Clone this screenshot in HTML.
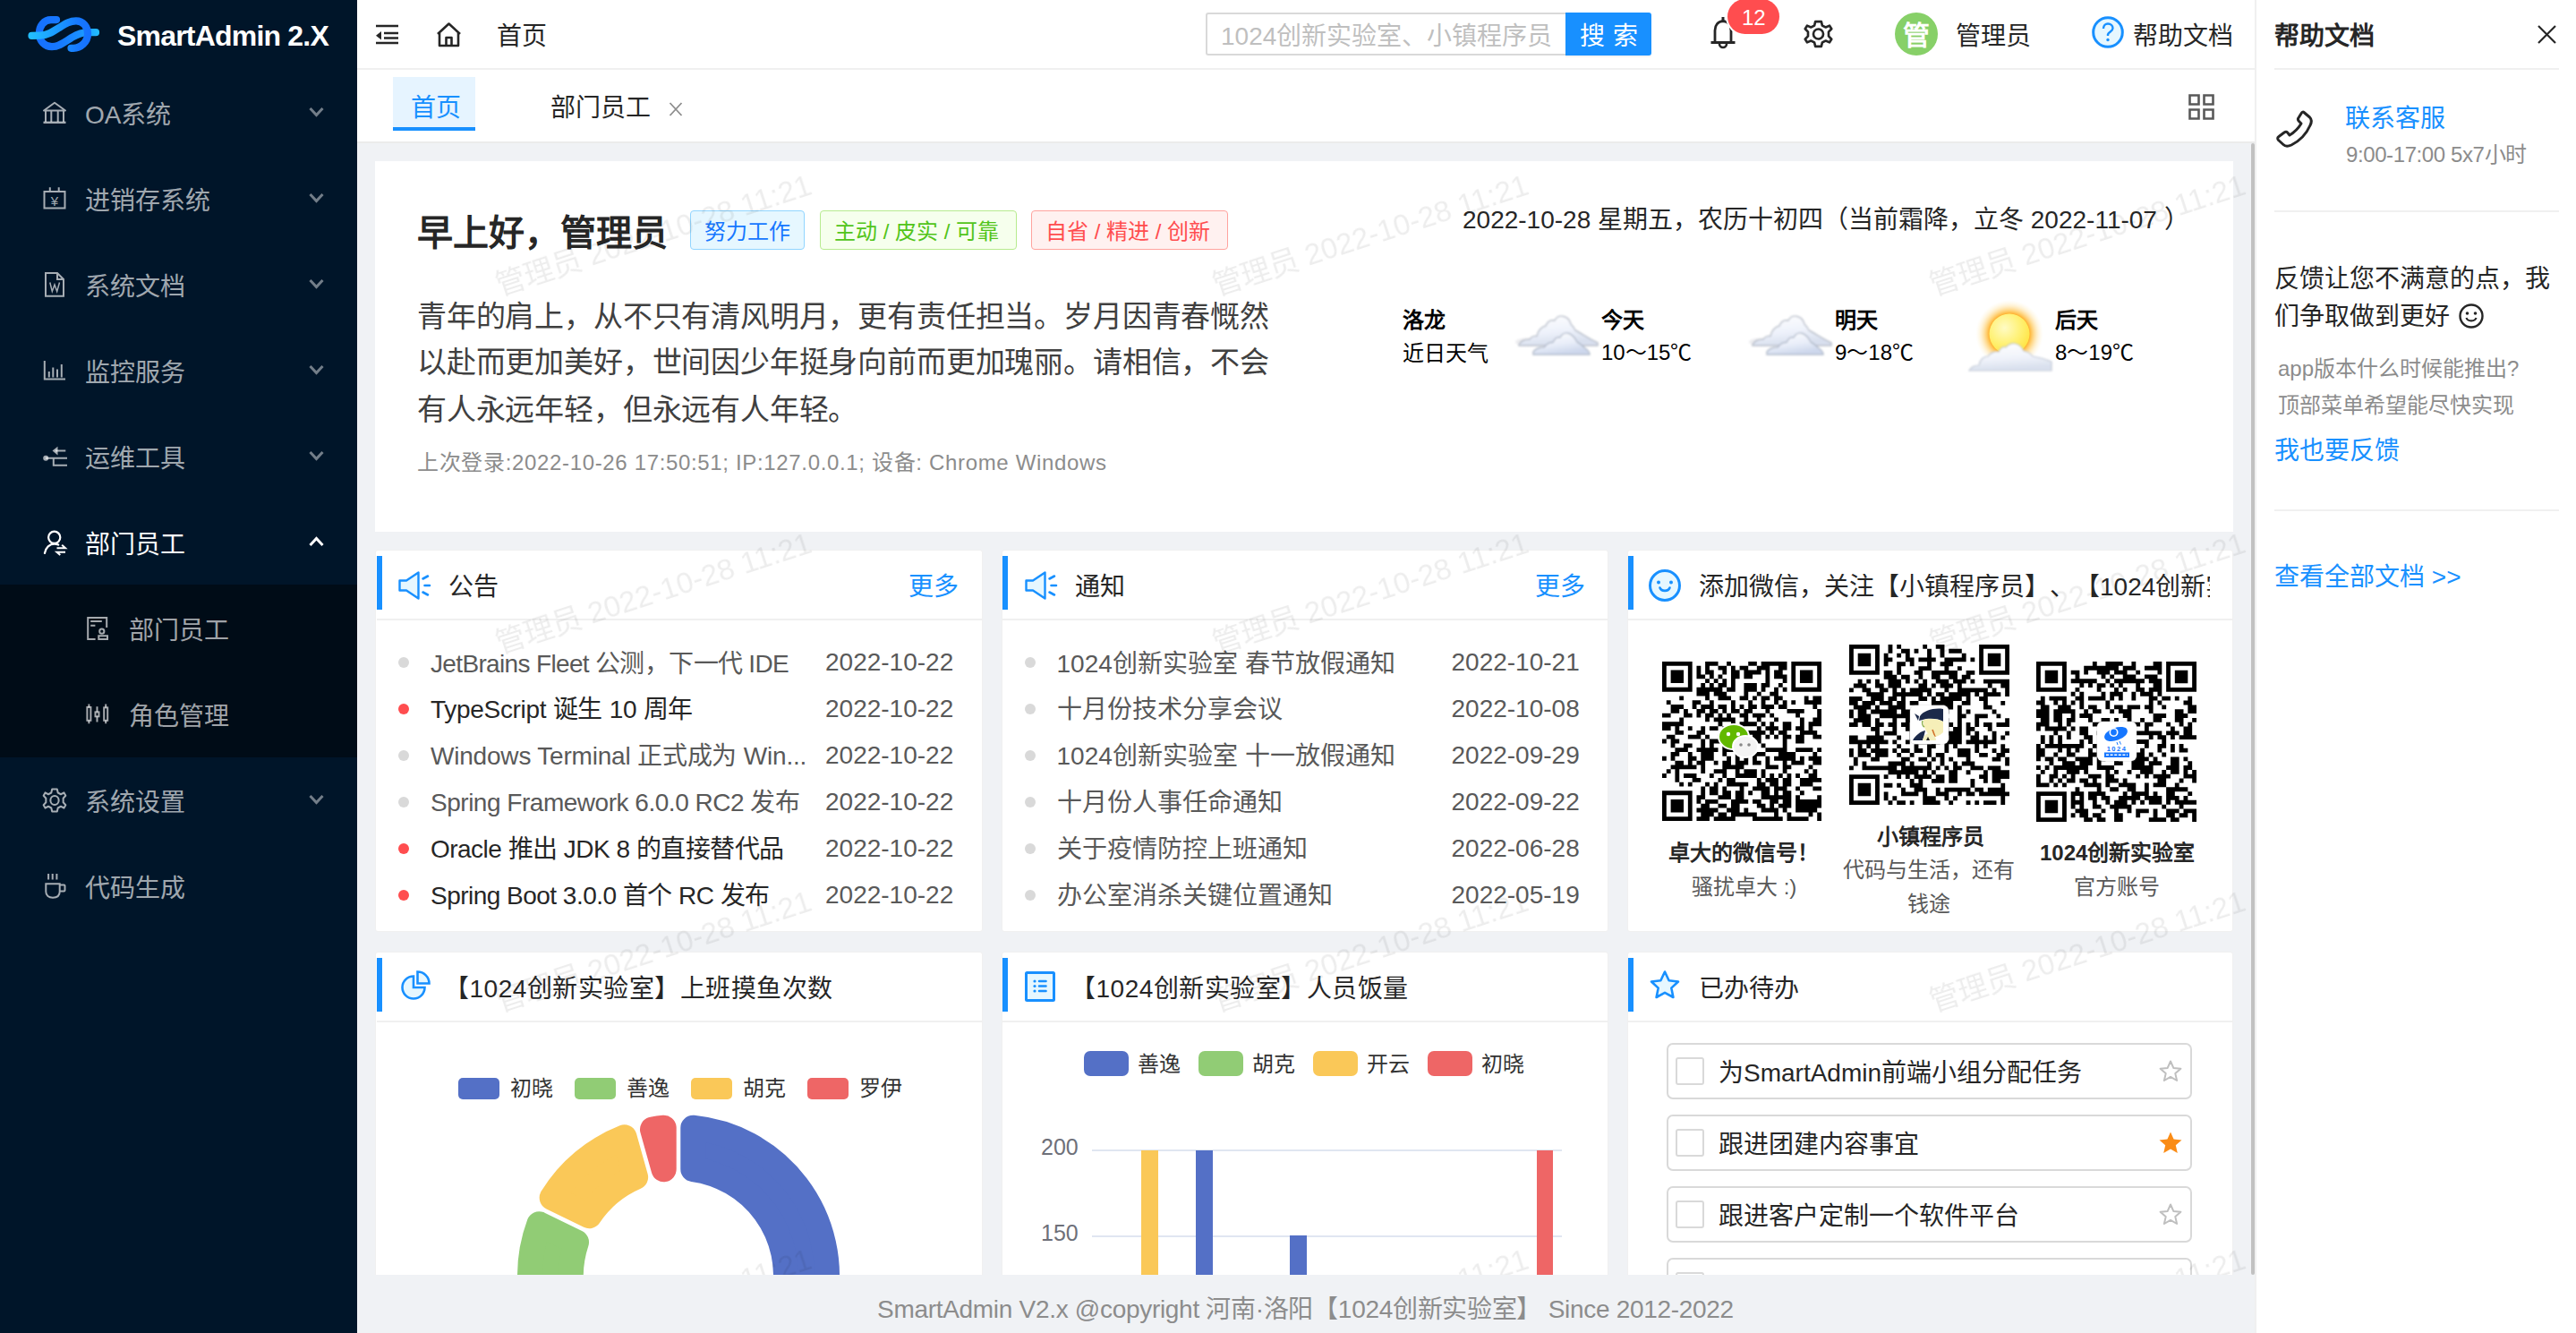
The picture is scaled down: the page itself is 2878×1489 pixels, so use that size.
<!DOCTYPE html><html lang="zh-CN"><head><meta charset="utf-8"><style>
*{box-sizing:border-box;margin:0;padding:0}
html,body{width:2878px;height:1489px;overflow:hidden;background:#f0f2f5;font-family:"Liberation Sans", sans-serif;text-spacing-trim:space-all}
.t{position:absolute;white-space:nowrap}
.a{position:absolute}
svg{position:absolute;overflow:visible}
</style></head><body>
<div class="a" style="left:0;top:0;width:399px;height:1489px;background:#001529"></div>
<div class="a" style="left:0;top:653px;width:399px;height:193px;background:#000c17"></div>
<svg style="left:28px;top:14px" width="88" height="48" viewBox="0 0 88 48">
<defs><linearGradient id="lgA" gradientUnits="userSpaceOnUse" x1="7" y1="0" x2="74" y2="0"><stop offset="0" stop-color="#22bdff"/><stop offset="0.45" stop-color="#1a98ff"/><stop offset="0.8" stop-color="#1677ff"/><stop offset="1" stop-color="#1670ff"/></linearGradient>
<linearGradient id="lgB" gradientUnits="userSpaceOnUse" x1="12" y1="0" x2="82" y2="0"><stop offset="0" stop-color="#1670ff"/><stop offset="0.35" stop-color="#1677ff"/><stop offset="0.7" stop-color="#1a90ff"/><stop offset="1" stop-color="#22bbff"/></linearGradient></defs>
<path d="M35 8.1 L29 8.1 C21 8.1 15.9 15 15.9 23 C15.9 32 22 38.2 30 38.2 C38 38.2 44 33 52 28 C60 23.5 64 22.2 70 22.2 L79 22.2" fill="none" stroke="url(#lgB)" stroke-width="8.2" stroke-linecap="round"/>
<path d="M7.5 25.8 L17 25.6 C25 25.4 30 22 38 17 C46 12 50 9.4 57 9.4 C65 9.4 70 16 70 24 C70 33 62 39.8 54 39.8 L51.5 39.8" fill="none" stroke="url(#lgA)" stroke-width="8.2" stroke-linecap="round"/>
</svg>
<div class="t" style="left:131px;top:23.5px;font-size:32px;line-height:32px;color:#ffffff;font-weight:bold;letter-spacing:-0.8px;">SmartAdmin 2.X</div>
<svg style="left:48px;top:113px;color:rgba(255,255,255,0.65)" width="28" height="28" viewBox="0 0 28 28"><path d="M1 10.5 L13 1.7 L25 10.5 Z M3 10.5 V23 M9.3 10.5 V23 M16.7 10.5 V23 M23 10.5 V23" fill="none" stroke="currentColor" stroke-width="2" stroke-linejoin="round"/><path d="M0.5 23.8 H25.5" stroke="currentColor" stroke-width="2.4"/></svg>
<div class="t" style="left:95px;top:114.5px;font-size:28px;line-height:28px;color:rgba(255,255,255,0.65);font-weight:normal;">OA系统</div>
<svg style="left:345px;top:119px" width="17" height="12"><path d="M1.5 2 L8.5 9.5 L15.5 2" fill="none" stroke="rgba(255,255,255,0.45)" stroke-width="3"/></svg>
<svg style="left:48px;top:209px;color:rgba(255,255,255,0.65)" width="28" height="28" viewBox="0 0 28 28"><path d="M1.5 4.9 H24.5 V23.4 H1.5 Z M7.8 0.2 V6 M17.7 0.2 V6" fill="none" stroke="currentColor" stroke-width="2"/><text x="13" y="20.5" font-size="15" text-anchor="middle" fill="currentColor" font-family="Liberation Sans">¥</text></svg>
<div class="t" style="left:95px;top:210.5px;font-size:28px;line-height:28px;color:rgba(255,255,255,0.65);font-weight:normal;">进销存系统</div>
<svg style="left:345px;top:215px" width="17" height="12"><path d="M1.5 2 L8.5 9.5 L15.5 2" fill="none" stroke="rgba(255,255,255,0.45)" stroke-width="3"/></svg>
<svg style="left:48px;top:305px;color:rgba(255,255,255,0.65)" width="28" height="28" viewBox="0 0 28 28"><path d="M3 0 H16 L23 7 V25.8 H3 Z M16 0 V7 H23" fill="none" stroke="currentColor" stroke-width="2" stroke-linejoin="miter"/><path d="M7.8 10.5 L10.3 20.5 L13 13 L15.7 20.5 L18.5 10.5" fill="none" stroke="currentColor" stroke-width="1.5"/></svg>
<div class="t" style="left:95px;top:306.5px;font-size:28px;line-height:28px;color:rgba(255,255,255,0.65);font-weight:normal;">系统文档</div>
<svg style="left:345px;top:311px" width="17" height="12"><path d="M1.5 2 L8.5 9.5 L15.5 2" fill="none" stroke="rgba(255,255,255,0.45)" stroke-width="3"/></svg>
<svg style="left:48px;top:401px;color:rgba(255,255,255,0.65)" width="28" height="28" viewBox="0 0 28 28"><path d="M1.8 2 V22.5 H25 M6.8 20.5 V14 M11.3 20.5 V9.6 M16 20.5 V11.4 M20.8 20.5 V6" fill="none" stroke="currentColor" stroke-width="2"/></svg>
<div class="t" style="left:95px;top:402.5px;font-size:28px;line-height:28px;color:rgba(255,255,255,0.65);font-weight:normal;">监控服务</div>
<svg style="left:345px;top:407px" width="17" height="12"><path d="M1.5 2 L8.5 9.5 L15.5 2" fill="none" stroke="rgba(255,255,255,0.45)" stroke-width="3"/></svg>
<svg style="left:48px;top:497px;color:rgba(255,255,255,0.65)" width="28" height="28" viewBox="0 0 28 28"><circle cx="3.2" cy="14.7" r="3" fill="currentColor"/><path d="M3 14.7 H27 M11.8 14.7 V22.8 H27 M14 6.6 H25.3" fill="none" stroke="currentColor" stroke-width="2"/><path d="M10.5 6.6 L16.5 1.8 L16.5 11.4 Z" fill="currentColor"/></svg>
<div class="t" style="left:95px;top:498.5px;font-size:28px;line-height:28px;color:rgba(255,255,255,0.65);font-weight:normal;">运维工具</div>
<svg style="left:345px;top:503px" width="17" height="12"><path d="M1.5 2 L8.5 9.5 L15.5 2" fill="none" stroke="rgba(255,255,255,0.45)" stroke-width="3"/></svg>
<svg style="left:48px;top:593px;color:#ffffff" width="28" height="28" viewBox="0 0 28 28"><circle cx="12.7" cy="7.3" r="6.6" fill="none" stroke="currentColor" stroke-width="2.2"/><path d="M1.9 25 C3 18.5 7.5 14.6 12.7 14.6 C14.5 14.6 16 15 17.2 15.6" fill="none" stroke="currentColor" stroke-width="2.2" stroke-linecap="round"/><path d="M15.5 19.2 H25 L21.2 15.8 M25 23.8 H15.5 L19.3 27" fill="none" stroke="currentColor" stroke-width="2"/></svg>
<div class="t" style="left:95px;top:594.5px;font-size:28px;line-height:28px;color:#ffffff;font-weight:normal;">部门员工</div>
<svg style="left:345px;top:599px" width="17" height="12"><path d="M1.5 10 L8.5 2.5 L15.5 10" fill="none" stroke="#fff" stroke-width="3"/></svg>
<svg style="left:48px;top:880px;color:rgba(255,255,255,0.65)" width="26" height="28" viewBox="0 0 28 28" preserveAspectRatio="none"><path d="M14 1.5 L17 1.5 L18 5.5 L21.5 7.2 L25.3 5.5 L27.3 8.8 L24.4 11.8 L24.4 16.2 L27.3 19.2 L25.3 22.5 L21.5 20.8 L18 22.5 L17 26.5 L11 26.5 L10 22.5 L6.5 20.8 L2.7 22.5 L0.7 19.2 L3.6 16.2 L3.6 11.8 L0.7 8.8 L2.7 5.5 L6.5 7.2 L10 5.5 L11 1.5 Z" fill="none" stroke="currentColor" stroke-width="2.2" stroke-linejoin="round"/><circle cx="14" cy="14" r="5" fill="none" stroke="currentColor" stroke-width="2.2"/></svg>
<div class="t" style="left:95px;top:882.5px;font-size:28px;line-height:28px;color:rgba(255,255,255,0.65);font-weight:normal;">系统设置</div>
<svg style="left:345px;top:887px" width="17" height="12"><path d="M1.5 2 L8.5 9.5 L15.5 2" fill="none" stroke="rgba(255,255,255,0.45)" stroke-width="3"/></svg>
<svg style="left:48px;top:977px;color:rgba(255,255,255,0.65)" width="28" height="28" viewBox="0 0 28 28"><path d="M3.3 10.3 H18.7 V19 C18.7 23.5 15.5 25.7 11 25.7 C6.5 25.7 3.3 23.5 3.3 19 Z M18.7 11.4 H23.5 Q24.5 11.4 24.5 12.4 V17.6 Q24.5 18.6 23.5 18.6 H18.7 M6.1 -1 V5.5 M10.7 -1 V5.5 M15.4 -1 V5.5" fill="none" stroke="currentColor" stroke-width="2"/></svg>
<div class="t" style="left:95px;top:978.5px;font-size:28px;line-height:28px;color:rgba(255,255,255,0.65);font-weight:normal;">代码生成</div>
<svg style="left:96px;top:689px;color:rgba(255,255,255,0.65)" width="26" height="28" viewBox="0 0 26 28"><path d="M10.6 25 H2.2 V1.1 H23.2 V12 M5.2 4.9 H17.8 M5.2 9.8 H10.4" fill="none" stroke="currentColor" stroke-width="2"/><circle cx="17.8" cy="16.2" r="2.6" fill="none" stroke="currentColor" stroke-width="2"/><path d="M14.3 25 V21.2 H24 V25 Z" fill="none" stroke="currentColor" stroke-width="2"/></svg>
<div class="t" style="left:144px;top:690.5px;font-size:28px;line-height:28px;color:rgba(255,255,255,0.65);font-weight:normal;">部门员工</div>
<svg style="left:96px;top:785px;color:rgba(255,255,255,0.65)" width="26" height="28" viewBox="0 0 26 28"><path d="M3.4 1.6 V23.2 M12.5 4.3 V21.4 M22.2 1.6 V23.2" fill="none" stroke="currentColor" stroke-width="2"/><rect x="1.4" y="5" width="4" height="14.8" fill="#000c17" stroke="currentColor" stroke-width="2"/><rect x="10.5" y="10.4" width="4" height="4.9" fill="#000c17" stroke="currentColor" stroke-width="2"/><rect x="20.2" y="5.4" width="4" height="14.4" fill="#000c17" stroke="currentColor" stroke-width="2"/></svg>
<div class="t" style="left:144px;top:786.5px;font-size:28px;line-height:28px;color:rgba(255,255,255,0.65);font-weight:normal;">角色管理</div>
<div class="a" style="left:399px;top:0;width:2120px;height:160px;background:#fff"></div>
<div class="a" style="left:399px;top:76px;width:2120px;height:2px;background:#f0f0f0"></div>
<div class="a" style="left:399px;top:158px;width:2120px;height:2px;background:#ebebeb"></div>
<svg style="left:420px;top:27px" width="26" height="23" viewBox="0 0 26 23"><path d="M0 2 H25 M9 10 H25 M9 15.5 H25 M0 21 H25" stroke="#262626" stroke-width="2.6" fill="none"/><path d="M0 12.7 L6 8 L6 17.4 Z" fill="#262626"/></svg>
<svg style="left:487px;top:25px" width="29" height="28" viewBox="0 0 29 28"><path d="M2 13 L14.5 1.5 L27 13 M4 11 V26 H25 V11 M11.5 26 V17 H17.5 V26" fill="none" stroke="#262626" stroke-width="2.6" stroke-linejoin="round"/></svg>
<div class="t" style="left:555px;top:26.8px;font-size:28px;line-height:28px;color:#262626;font-weight:normal;">首页</div>
<div class="a" style="left:1347px;top:14px;width:403px;height:48px;border:2px solid #d9d9d9;border-right:none;border-radius:3px 0 0 3px;background:#fff"></div>
<div class="t" style="left:1364px;top:26.8px;font-size:28px;line-height:28px;color:#bfbfbf;font-weight:normal;">1024创新实验室、小镇程序员</div>
<div class="a" style="left:1749px;top:14px;width:96px;height:48px;background:#1890ff;border-radius:0 3px 3px 0;box-shadow:0 2px 0 rgba(0,0,0,0.045)"></div>
<div class="t" style="left:1765px;top:26.8px;font-size:28px;line-height:28px;color:#ffffff;font-weight:normal;letter-spacing:9px;">搜索</div>
<svg style="left:1910px;top:17px" width="30" height="38" viewBox="0 0 30 38"><path d="M6 30 V17 C6 11 9.5 7 15 6.5 C20.5 7 24 11 24 17 V30 M1.5 30.5 H28.5" fill="none" stroke="#262626" stroke-width="2.8"/><path d="M15 2 L15 6" stroke="#262626" stroke-width="3"/><path d="M11 32 A4 4 0 0 0 19 32" fill="none" stroke="#262626" stroke-width="2.6"/></svg>
<div class="a" style="left:1930px;top:-1px;width:58px;height:39px;border-radius:20px;background:#ff4d4f;box-shadow:0 0 0 2px #fff"></div>
<div class="t" style="left:1946px;top:7.5px;font-size:24px;line-height:24px;color:#ffffff;font-weight:normal;">12</div>
<svg style="left:2016px;top:22px" width="31" height="32" viewBox="0 0 28 28"><path d="M14 1.5 L17 1.5 L18 5.5 L21.5 7.2 L25.3 5.5 L27.3 8.8 L24.4 11.8 L24.4 16.2 L27.3 19.2 L25.3 22.5 L21.5 20.8 L18 22.5 L17 26.5 L11 26.5 L10 22.5 L6.5 20.8 L2.7 22.5 L0.7 19.2 L3.6 16.2 L3.6 11.8 L0.7 8.8 L2.7 5.5 L6.5 7.2 L10 5.5 L11 1.5 Z" fill="none" stroke="#262626" stroke-width="2.4" stroke-linejoin="round"/><circle cx="14" cy="14" r="5" fill="none" stroke="#262626" stroke-width="2.4"/></svg>
<div class="a" style="left:2117px;top:14px;width:48px;height:48px;border-radius:50%;background:#87d068"></div>
<div class="t" style="left:2126px;top:25.0px;font-size:30px;line-height:30px;color:#ffffff;font-weight:bold;">管</div>
<div class="t" style="left:2185px;top:26.8px;font-size:28px;line-height:28px;color:#262626;font-weight:normal;">管理员</div>
<svg style="left:2337px;top:18px" width="36" height="36" viewBox="0 0 36 36"><circle cx="18" cy="18" r="16.3" fill="#e6f7ff" stroke="#1890ff" stroke-width="3"/><path d="M13 14 C13 10.5 15.5 8.5 18 8.5 C21 8.5 23.5 10.5 23.5 13.5 C23.5 17 19 17.5 18 20.5 V22" fill="none" stroke="#1890ff" stroke-width="2.4"/><circle cx="18" cy="26.5" r="1.7" fill="#1890ff"/></svg>
<div class="t" style="left:2383px;top:26.8px;font-size:28px;line-height:28px;color:#262626;font-weight:normal;">帮助文档</div>
<div class="a" style="left:439px;top:86px;width:92px;height:60px;background:#e6f4ff"></div>
<div class="a" style="left:439px;top:142px;width:92px;height:4px;background:#1890ff"></div>
<div class="t" style="left:459px;top:106.8px;font-size:28px;line-height:28px;color:#1890ff;font-weight:normal;">首页</div>
<div class="t" style="left:615px;top:106.8px;font-size:28px;line-height:28px;color:#262626;font-weight:normal;">部门员工</div>
<svg style="left:747px;top:114px" width="16" height="16" viewBox="0 0 16 16"><path d="M1.5 1 L14.5 15 M14.5 1 L1.5 15" stroke="#8c8c8c" stroke-width="1.8"/></svg>
<svg style="left:2445px;top:105px" width="29" height="29" viewBox="0 0 29 29"><path d="M1.5 1.5 H11.5 V11.5 H1.5 Z M17.5 1.5 H27.5 V11.5 H17.5 Z M1.5 17.5 H11.5 V27.5 H1.5 Z M17.5 17.5 H27.5 V27.5 H17.5 Z" fill="none" stroke="#595959" stroke-width="2.6"/></svg>
<div class="a" style="left:2519px;top:0;width:2px;height:1489px;background:#f0f0f0"></div>
<div class="a" style="left:2521px;top:0;width:357px;height:1489px;background:#fff"></div>
<div class="t" style="left:2541px;top:26.9px;font-size:28px;line-height:28px;color:#262626;font-weight:bold;">帮助文档</div>
<svg style="left:2835px;top:28px" width="21" height="21" viewBox="0 0 21 21"><path d="M1 1 L20 20 M20 1 L1 20" stroke="#262626" stroke-width="2.2"/></svg>
<div class="a" style="left:2541px;top:76px;width:318px;height:2px;background:#f0f0f0"></div>
<svg style="left:2543px;top:123px" width="42" height="42" viewBox="0 0 42 42"><path d="M31 2.5 L37.5 8 C40 10.5 40 13 38 17 C34 26 27 34 17 39 C12.5 41 10 40.5 8 38.5 L2.5 33.5 C1.2 32 1.5 30.5 3 29.5 L9 25 C10.5 24 12 24 13 25.5 L15 28 C20 25 25 20 28 15 L25.5 12.5 C24 11 24 9.5 25.2 8.3 L28.5 3 C29.2 2 30.2 1.8 31 2.5 Z" fill="none" stroke="#262626" stroke-width="3" stroke-linejoin="round"/></svg>
<div class="t" style="left:2620px;top:119.1px;font-size:28px;line-height:28px;color:#1890ff;font-weight:normal;">联系客服</div>
<div class="t" style="left:2621px;top:161.0px;font-size:24px;line-height:24px;color:#8c8c8c;font-weight:normal;letter-spacing:-0.4px;">9:00-17:00 5x7小时</div>
<div class="a" style="left:2541px;top:235px;width:318px;height:2px;background:#f0f0f0"></div>
<div class="t" style="left:2541px;top:297.5px;font-size:28px;line-height:28px;color:#262626;font-weight:normal;">反馈让您不满意的点，我</div>
<div class="t" style="left:2541px;top:340.0px;font-size:28px;line-height:28px;color:#262626;font-weight:normal;">们争取做到更好</div>
<svg style="left:2747px;top:339px" width="28" height="28" viewBox="0 0 28 28"><circle cx="14" cy="14" r="12.5" fill="none" stroke="#262626" stroke-width="2.4"/><circle cx="9.5" cy="11" r="1.8" fill="#262626"/><circle cx="18.5" cy="11" r="1.8" fill="#262626"/><path d="M8.5 16 C10 20.5 18 20.5 19.5 16" fill="none" stroke="#262626" stroke-width="2.2"/></svg>
<div class="t" style="left:2545px;top:399.5px;font-size:24px;line-height:24px;color:#8c8c8c;font-weight:normal;">app版本什么时候能推出?</div>
<div class="t" style="left:2545px;top:440.8px;font-size:24px;line-height:24px;color:#8c8c8c;font-weight:normal;">顶部菜单希望能尽快实现</div>
<div class="t" style="left:2541px;top:489.5px;font-size:28px;line-height:28px;color:#1890ff;font-weight:normal;">我也要反馈</div>
<div class="a" style="left:2541px;top:569px;width:318px;height:2px;background:#f0f0f0"></div>
<div class="t" style="left:2541px;top:631.2px;font-size:28px;line-height:28px;color:#1890ff;font-weight:normal;">查看全部文档 &gt;&gt;</div>
<div class="a" style="left:399px;top:160px;width:2116px;height:1264px;overflow:hidden">
<div class="a" style="left:20px;top:20px;width:2076px;height:414px;background:#fff"></div>
<div class="t" style="left:67px;top:80.0px;font-size:40px;line-height:40px;color:#262626;font-weight:bold;">早上好，管理员</div>
<div class="a" style="left:372px;top:75px;width:128px;height:44px;background:#e6f7ff;border:1.5px solid #91d5ff;border-radius:4px"></div>
<div class="t" style="left:388px;top:86.5px;font-size:24px;line-height:24px;color:#1677ff;font-weight:normal;">努力工作</div>
<div class="a" style="left:517px;top:75px;width:220px;height:44px;background:#f6ffed;border:1.5px solid #b7eb8f;border-radius:4px"></div>
<div class="t" style="left:533px;top:86.5px;font-size:24px;line-height:24px;color:#52c41a;font-weight:normal;">主动 / 皮实 / 可靠</div>
<div class="a" style="left:753px;top:75px;width:220px;height:44px;background:#fff1f0;border:1.5px solid #ffa39e;border-radius:4px"></div>
<div class="t" style="left:769px;top:86.5px;font-size:24px;line-height:24px;color:#ff4d4f;font-weight:normal;">自省 / 精进 / 创新</div>
<div class="t" style="left:67px;top:176.6px;font-size:33px;line-height:33px;color:#404040;font-weight:normal;letter-spacing:-0.18px;">青年的肩上，从不只有清风明月，更有责任担当。岁月因青春慨然</div>
<div class="t" style="left:67px;top:228.0px;font-size:33px;line-height:33px;color:#404040;font-weight:normal;letter-spacing:-0.18px;">以赴而更加美好，世间因少年挺身向前而更加瑰丽。请相信，不会</div>
<div class="t" style="left:67px;top:280.5px;font-size:33px;line-height:33px;color:#404040;font-weight:normal;letter-spacing:-0.18px;">有人永远年轻，但永远有人年轻。</div>
<div class="t" style="left:67px;top:345.2px;font-size:24px;line-height:24px;color:#8c8c8c;font-weight:normal;letter-spacing:0.66px;">上次登录:2022-10-26 17:50:51; IP:127.0.0.1; 设备: Chrome Windows</div>
<div class="t" style="left:1235px;top:71.6px;font-size:28px;line-height:28px;color:#262626;font-weight:normal;">2022-10-28 星期五，农历十初四（当前霜降，立冬 2022-11-07 ）</div>
<div class="t" style="left:1168px;top:186.0px;font-size:24px;line-height:24px;color:#000;font-weight:bold;">洛龙</div>
<div class="t" style="left:1168px;top:223.2px;font-size:24px;line-height:24px;color:#000;font-weight:normal;">近日天气</div>
<svg style="left:1286px;top:180px;" width="110" height="65" viewBox="0 0 110 65"><defs><linearGradient id="cba" x1="0" y1="0" x2="0.3" y2="1"><stop offset="0" stop-color="#ffffff"/><stop offset="0.6" stop-color="#eef2fb"/><stop offset="1" stop-color="#d8dfee"/></linearGradient><linearGradient id="cfa" x1="0" y1="0" x2="0.4" y2="1"><stop offset="0" stop-color="#ffffff"/><stop offset="0.6" stop-color="#e9eef9"/><stop offset="1" stop-color="#cdd7ec"/></linearGradient><filter id="bla" x="-20%" y="-20%" width="140%" height="140%"><feGaussianBlur stdDeviation="0.9"/></filter></defs>
<g filter="url(#bla)"><ellipse cx="22" cy="42" rx="14" ry="4.5" fill="#e8e9ec" opacity="0.8"/>
<path d="M12 45 C14 41 19 39 24 39 C26 36 29 35 32 35.5 C33 30 37 25 42 24 C44 19 48 17 52 18 C54 14 58 12.5 62 13.5 C66 14.5 69 18 70 22 C72 24 74 27 75 29 C81 32 90 38 100 43 L100 46 L12 46 Z" fill="url(#cba)" stroke="#b9bfca" stroke-width="1.4"/>
<path d="M28 53 C30 50 35 48 40 48 C43 44 46 42 50 42.5 C52 38 55 36 58 37 C60 33 64 31 68 32.5 C72 34 75 38 77 42 C81 44 84 47 86 49 C89 51 91 53 91 56 L28 56 Z" fill="url(#cfa)" stroke="#b3bccb" stroke-width="1.4"/></g></svg>
<div class="t" style="left:1390px;top:186.0px;font-size:24px;line-height:24px;color:#000;font-weight:bold;">今天</div>
<div class="t" style="left:1390px;top:222.1px;font-size:24px;line-height:24px;color:#000;font-weight:normal;">10～15℃</div>
<svg style="left:1547px;top:180px;" width="110" height="65" viewBox="0 0 110 65"><defs><linearGradient id="cbb" x1="0" y1="0" x2="0.3" y2="1"><stop offset="0" stop-color="#ffffff"/><stop offset="0.6" stop-color="#eef2fb"/><stop offset="1" stop-color="#d8dfee"/></linearGradient><linearGradient id="cfb" x1="0" y1="0" x2="0.4" y2="1"><stop offset="0" stop-color="#ffffff"/><stop offset="0.6" stop-color="#e9eef9"/><stop offset="1" stop-color="#cdd7ec"/></linearGradient><filter id="blb" x="-20%" y="-20%" width="140%" height="140%"><feGaussianBlur stdDeviation="0.9"/></filter></defs>
<g filter="url(#blb)"><ellipse cx="22" cy="42" rx="14" ry="4.5" fill="#e8e9ec" opacity="0.8"/>
<path d="M12 45 C14 41 19 39 24 39 C26 36 29 35 32 35.5 C33 30 37 25 42 24 C44 19 48 17 52 18 C54 14 58 12.5 62 13.5 C66 14.5 69 18 70 22 C72 24 74 27 75 29 C81 32 90 38 100 43 L100 46 L12 46 Z" fill="url(#cbb)" stroke="#b9bfca" stroke-width="1.4"/>
<path d="M28 53 C30 50 35 48 40 48 C43 44 46 42 50 42.5 C52 38 55 36 58 37 C60 33 64 31 68 32.5 C72 34 75 38 77 42 C81 44 84 47 86 49 C89 51 91 53 91 56 L28 56 Z" fill="url(#cfb)" stroke="#b3bccb" stroke-width="1.4"/></g></svg>
<div class="t" style="left:1651px;top:186.0px;font-size:24px;line-height:24px;color:#000;font-weight:bold;">明天</div>
<div class="t" style="left:1651px;top:222.1px;font-size:24px;line-height:24px;color:#000;font-weight:normal;">9～18℃</div>
<svg style="left:1796px;top:170px;" width="100" height="90" viewBox="0 0 100 90"><defs><radialGradient id="sg" cx="0.5" cy="0.5" r="0.5"><stop offset="0" stop-color="#ffc040" stop-opacity="1"/><stop offset="0.6" stop-color="#ffb436" stop-opacity="1"/><stop offset="0.68" stop-color="#ffc552" stop-opacity="0.8"/><stop offset="0.85" stop-color="#ffdf95" stop-opacity="0.35"/><stop offset="1" stop-color="#fff3cc" stop-opacity="0"/></radialGradient><radialGradient id="sd" cx="0.38" cy="0.35" r="0.75"><stop offset="0" stop-color="#fffbc4"/><stop offset="0.5" stop-color="#fff27a"/><stop offset="1" stop-color="#ffe23a"/></radialGradient><linearGradient id="sc" x1="0" y1="0" x2="0.2" y2="1"><stop offset="0" stop-color="#ffffff"/><stop offset="0.6" stop-color="#f0f3fa"/><stop offset="1" stop-color="#d9e0ee"/></linearGradient><filter id="sb" x="-20%" y="-20%" width="140%" height="140%"><feGaussianBlur stdDeviation="0.9"/></filter><filter id="sb2"><feGaussianBlur stdDeviation="0.6"/></filter></defs>
<circle cx="50" cy="43" r="38" fill="url(#sg)"/><circle cx="50" cy="43" r="22.5" fill="url(#sd)" filter="url(#sb2)"/>
<g filter="url(#sb)"><path d="M5 84 C7 80 11 78 16 78 C17 72 21 68 26 68 C29 64 34 62 38 63 C40 59 43 57 46 58 C49 55 53 53 57 54 C61 55 64 58 66 62 C70 63 74 65 76 68 C82 69 90 71 97 74 L97 84 Z" fill="url(#sc)" stroke="#c3cad6" stroke-width="1.2"/></g></svg>
<div class="t" style="left:1897px;top:186.0px;font-size:24px;line-height:24px;color:#000;font-weight:bold;">后天</div>
<div class="t" style="left:1897px;top:222.1px;font-size:24px;line-height:24px;color:#000;font-weight:normal;">8～19℃</div>
<div class="a" style="left:20px;top:454px;width:679px;height:427px;background:#fff;border:1.5px solid #f0f0f0;border-radius:3px"></div>
<div class="a" style="left:21.5px;top:461px;width:6.0px;height:60px;background:#1890ff"></div>
<div class="a" style="left:21.5px;top:531px;width:676.0px;height:2px;background:#f0f0f0"></div>
<svg style="left:46px;top:478px;" width="36" height="32" viewBox="0 0 36 32"><path d="M1.5 10.5 H9 L22.5 1.5 V30.5 L9 21.5 H1.5 Z" fill="#e6f7ff" stroke="#1890ff" stroke-width="2.4" stroke-linejoin="round"/><path d="M27.5 8.5 L33 5.5 M29.5 16 H35 M27.5 23.5 L33 26.5" stroke="#1890ff" stroke-width="2.6" stroke-linecap="round"/></svg>
<div class="t" style="left:102px;top:482.4px;font-size:28px;line-height:28px;color:#262626;font-weight:normal;">公告</div>
<div class="t" style="left:616px;top:482.4px;font-size:28px;line-height:28px;color:#1890ff;font-weight:normal;">更多</div>
<div class="a" style="left:46px;top:574.0px;width:12px;height:12.0px;border-radius:50%;background:#d9d9d9"></div>
<div class="t" style="left:82px;top:567.5px;font-size:28px;line-height:28px;color:#595959;font-weight:normal;letter-spacing:-0.65px;">JetBrains Fleet 公测，下一代 IDE</div>
<div class="t" style="left:523px;top:566.0px;font-size:28px;line-height:28px;color:#595959;font-weight:normal;">2022-10-22</div>
<div class="a" style="left:46px;top:625.9px;width:12px;height:12.0px;border-radius:50%;background:#ff4d4f"></div>
<div class="t" style="left:82px;top:619.4px;font-size:28px;line-height:28px;color:#262626;font-weight:normal;letter-spacing:-0.3px;">TypeScript 诞生 10 周年</div>
<div class="t" style="left:523px;top:617.9px;font-size:28px;line-height:28px;color:#595959;font-weight:normal;">2022-10-22</div>
<div class="a" style="left:46px;top:677.8px;width:12px;height:12.0px;border-radius:50%;background:#d9d9d9"></div>
<div class="t" style="left:82px;top:671.3px;font-size:28px;line-height:28px;color:#595959;font-weight:normal;letter-spacing:-0.2px;">Windows Terminal 正式成为 Win...</div>
<div class="t" style="left:523px;top:669.8px;font-size:28px;line-height:28px;color:#595959;font-weight:normal;">2022-10-22</div>
<div class="a" style="left:46px;top:729.7px;width:12px;height:12.0px;border-radius:50%;background:#d9d9d9"></div>
<div class="t" style="left:82px;top:723.2px;font-size:28px;line-height:28px;color:#595959;font-weight:normal;letter-spacing:-0.48px;">Spring Framework 6.0.0 RC2 发布</div>
<div class="t" style="left:523px;top:721.7px;font-size:28px;line-height:28px;color:#595959;font-weight:normal;">2022-10-22</div>
<div class="a" style="left:46px;top:781.6px;width:12px;height:12.0px;border-radius:50%;background:#ff4d4f"></div>
<div class="t" style="left:82px;top:775.1px;font-size:28px;line-height:28px;color:#262626;font-weight:normal;letter-spacing:-0.52px;">Oracle 推出 JDK 8 的直接替代品</div>
<div class="t" style="left:523px;top:773.6px;font-size:28px;line-height:28px;color:#595959;font-weight:normal;">2022-10-22</div>
<div class="a" style="left:46px;top:833.5px;width:12px;height:12.0px;border-radius:50%;background:#ff4d4f"></div>
<div class="t" style="left:82px;top:827.0px;font-size:28px;line-height:28px;color:#262626;font-weight:normal;letter-spacing:-0.52px;">Spring Boot 3.0.0 首个 RC 发布</div>
<div class="t" style="left:523px;top:825.5px;font-size:28px;line-height:28px;color:#595959;font-weight:normal;">2022-10-22</div>
<div class="a" style="left:719.5px;top:454px;width:678.5px;height:427px;background:#fff;border:1.5px solid #f0f0f0;border-radius:3px"></div>
<div class="a" style="left:721.0px;top:461px;width:6.0px;height:60px;background:#1890ff"></div>
<div class="a" style="left:721.0px;top:531px;width:675.5px;height:2px;background:#f0f0f0"></div>
<svg style="left:745.5px;top:478px;" width="36" height="32" viewBox="0 0 36 32"><path d="M1.5 10.5 H9 L22.5 1.5 V30.5 L9 21.5 H1.5 Z" fill="#e6f7ff" stroke="#1890ff" stroke-width="2.4" stroke-linejoin="round"/><path d="M27.5 8.5 L33 5.5 M29.5 16 H35 M27.5 23.5 L33 26.5" stroke="#1890ff" stroke-width="2.6" stroke-linecap="round"/></svg>
<div class="t" style="left:801.5px;top:482.4px;font-size:28px;line-height:28px;color:#262626;font-weight:normal;">通知</div>
<div class="t" style="left:1315.5px;top:482.4px;font-size:28px;line-height:28px;color:#1890ff;font-weight:normal;">更多</div>
<div class="a" style="left:745.5px;top:574.0px;width:12.0px;height:12.0px;border-radius:50%;background:#d9d9d9"></div>
<div class="t" style="left:781.5px;top:567.5px;font-size:28px;line-height:28px;color:#595959;font-weight:normal;">1024创新实验室 春节放假通知</div>
<div class="t" style="left:1222.5px;top:566.0px;font-size:28px;line-height:28px;color:#595959;font-weight:normal;">2022-10-21</div>
<div class="a" style="left:745.5px;top:625.9px;width:12.0px;height:12.0px;border-radius:50%;background:#d9d9d9"></div>
<div class="t" style="left:781.5px;top:619.4px;font-size:28px;line-height:28px;color:#595959;font-weight:normal;">十月份技术分享会议</div>
<div class="t" style="left:1222.5px;top:617.9px;font-size:28px;line-height:28px;color:#595959;font-weight:normal;">2022-10-08</div>
<div class="a" style="left:745.5px;top:677.8px;width:12.0px;height:12.0px;border-radius:50%;background:#d9d9d9"></div>
<div class="t" style="left:781.5px;top:671.3px;font-size:28px;line-height:28px;color:#595959;font-weight:normal;">1024创新实验室 十一放假通知</div>
<div class="t" style="left:1222.5px;top:669.8px;font-size:28px;line-height:28px;color:#595959;font-weight:normal;">2022-09-29</div>
<div class="a" style="left:745.5px;top:729.7px;width:12.0px;height:12.0px;border-radius:50%;background:#d9d9d9"></div>
<div class="t" style="left:781.5px;top:723.2px;font-size:28px;line-height:28px;color:#595959;font-weight:normal;">十月份人事任命通知</div>
<div class="t" style="left:1222.5px;top:721.7px;font-size:28px;line-height:28px;color:#595959;font-weight:normal;">2022-09-22</div>
<div class="a" style="left:745.5px;top:781.6px;width:12.0px;height:12.0px;border-radius:50%;background:#d9d9d9"></div>
<div class="t" style="left:781.5px;top:775.1px;font-size:28px;line-height:28px;color:#595959;font-weight:normal;">关于疫情防控上班通知</div>
<div class="t" style="left:1222.5px;top:773.6px;font-size:28px;line-height:28px;color:#595959;font-weight:normal;">2022-06-28</div>
<div class="a" style="left:745.5px;top:833.5px;width:12.0px;height:12.0px;border-radius:50%;background:#d9d9d9"></div>
<div class="t" style="left:781.5px;top:827.0px;font-size:28px;line-height:28px;color:#595959;font-weight:normal;">办公室消杀关键位置通知</div>
<div class="t" style="left:1222.5px;top:825.5px;font-size:28px;line-height:28px;color:#595959;font-weight:normal;">2022-05-19</div>
<div class="a" style="left:1418.5px;top:454px;width:677.5px;height:427px;background:#fff;border:1.5px solid #f0f0f0;border-radius:3px"></div>
<div class="a" style="left:1420.0px;top:461px;width:6.0px;height:60px;background:#1890ff"></div>
<div class="a" style="left:1420.0px;top:531px;width:674.5px;height:2px;background:#f0f0f0"></div>
<svg style="left:1443px;top:476px;" width="36" height="36" viewBox="0 0 36 36"><circle cx="18" cy="18" r="16.5" fill="#e6f7ff" stroke="#1890ff" stroke-width="3"/><circle cx="11" cy="14.5" r="2" fill="#1890ff"/><circle cx="25" cy="14.5" r="2" fill="#1890ff"/><path d="M12.5 20.5 C14 25 22 25 23.5 20.5" fill="none" stroke="#1890ff" stroke-width="2.6" stroke-linecap="round"/></svg>
<div class="a" style="left:1499px;top:480.9px;width:571px;height:30px;overflow:hidden"><div class="t" style="left:0px;top:1.5px;font-size:28px;line-height:28px;color:#262626;font-weight:normal;">添加微信，关注【小镇程序员】、【1024创新实验室】</div></div>
<svg style="left:1458px;top:579px;" width="178" height="178" viewBox="0 0 178 178"><path d="M0.00 0.00h33.68v4.81h-33.68zM48.11 0.00h14.43v4.81h-14.43zM72.16 0.00h4.81v4.81h-4.81zM96.22 0.00h9.62v4.81h-9.62zM110.65 0.00h28.86v4.81h-28.86zM144.32 0.00h33.68v4.81h-33.68zM0.00 4.81h4.81v4.81h-4.81zM28.86 4.81h4.81v4.81h-4.81zM38.49 4.81h4.81v4.81h-4.81zM48.11 4.81h4.81v4.81h-4.81zM62.54 4.81h9.62v4.81h-9.62zM76.97 4.81h4.81v4.81h-4.81zM86.59 4.81h9.62v4.81h-9.62zM105.84 4.81h14.43v4.81h-14.43zM129.89 4.81h9.62v4.81h-9.62zM144.32 4.81h4.81v4.81h-4.81zM173.19 4.81h4.81v4.81h-4.81zM0.00 9.62h4.81v4.81h-4.81zM9.62 9.62h14.43v4.81h-14.43zM28.86 9.62h4.81v4.81h-4.81zM38.49 9.62h4.81v4.81h-4.81zM48.11 9.62h9.62v4.81h-9.62zM67.35 9.62h4.81v4.81h-4.81zM76.97 9.62h9.62v4.81h-9.62zM91.41 9.62h19.24v4.81h-19.24zM115.46 9.62h4.81v4.81h-4.81zM125.08 9.62h9.62v4.81h-9.62zM144.32 9.62h4.81v4.81h-4.81zM153.95 9.62h14.43v4.81h-14.43zM173.19 9.62h4.81v4.81h-4.81zM0.00 14.43h4.81v4.81h-4.81zM9.62 14.43h14.43v4.81h-14.43zM28.86 14.43h4.81v4.81h-4.81zM38.49 14.43h9.62v4.81h-9.62zM52.92 14.43h4.81v4.81h-4.81zM62.54 14.43h4.81v4.81h-4.81zM76.97 14.43h9.62v4.81h-9.62zM91.41 14.43h9.62v4.81h-9.62zM115.46 14.43h4.81v4.81h-4.81zM125.08 14.43h14.43v4.81h-14.43zM144.32 14.43h4.81v4.81h-4.81zM153.95 14.43h14.43v4.81h-14.43zM173.19 14.43h4.81v4.81h-4.81zM0.00 19.24h4.81v4.81h-4.81zM9.62 19.24h14.43v4.81h-14.43zM28.86 19.24h4.81v4.81h-4.81zM48.11 19.24h4.81v4.81h-4.81zM57.73 19.24h4.81v4.81h-4.81zM67.35 19.24h4.81v4.81h-4.81zM76.97 19.24h4.81v4.81h-4.81zM115.46 19.24h4.81v4.81h-4.81zM134.70 19.24h4.81v4.81h-4.81zM144.32 19.24h4.81v4.81h-4.81zM153.95 19.24h14.43v4.81h-14.43zM173.19 19.24h4.81v4.81h-4.81zM0.00 24.05h4.81v4.81h-4.81zM28.86 24.05h4.81v4.81h-4.81zM43.30 24.05h4.81v4.81h-4.81zM52.92 24.05h4.81v4.81h-4.81zM62.54 24.05h9.62v4.81h-9.62zM76.97 24.05h4.81v4.81h-4.81zM91.41 24.05h14.43v4.81h-14.43zM110.65 24.05h9.62v4.81h-9.62zM129.89 24.05h4.81v4.81h-4.81zM144.32 24.05h4.81v4.81h-4.81zM173.19 24.05h4.81v4.81h-4.81zM0.00 28.86h33.68v4.81h-33.68zM38.49 28.86h28.86v4.81h-28.86zM72.16 28.86h9.62v4.81h-9.62zM91.41 28.86h14.43v4.81h-14.43zM110.65 28.86h4.81v4.81h-4.81zM125.08 28.86h4.81v4.81h-4.81zM134.70 28.86h4.81v4.81h-4.81zM144.32 28.86h33.68v4.81h-33.68zM38.49 33.68h14.43v4.81h-14.43zM57.73 33.68h14.43v4.81h-14.43zM91.41 33.68h4.81v4.81h-4.81zM105.84 33.68h4.81v4.81h-4.81zM120.27 33.68h9.62v4.81h-9.62zM19.24 38.49h4.81v4.81h-4.81zM48.11 38.49h4.81v4.81h-4.81zM62.54 38.49h14.43v4.81h-14.43zM86.59 38.49h9.62v4.81h-9.62zM101.03 38.49h4.81v4.81h-4.81zM110.65 38.49h9.62v4.81h-9.62zM125.08 38.49h9.62v4.81h-9.62zM158.76 38.49h4.81v4.81h-4.81zM168.38 38.49h9.62v4.81h-9.62zM4.81 43.30h4.81v4.81h-4.81zM33.68 43.30h9.62v4.81h-9.62zM52.92 43.30h4.81v4.81h-4.81zM76.97 43.30h4.81v4.81h-4.81zM96.22 43.30h4.81v4.81h-4.81zM110.65 43.30h4.81v4.81h-4.81zM125.08 43.30h4.81v4.81h-4.81zM134.70 43.30h4.81v4.81h-4.81zM144.32 43.30h4.81v4.81h-4.81zM158.76 43.30h19.24v4.81h-19.24zM9.62 48.11h14.43v4.81h-14.43zM33.68 48.11h4.81v4.81h-4.81zM43.30 48.11h14.43v4.81h-14.43zM62.54 48.11h9.62v4.81h-9.62zM76.97 48.11h4.81v4.81h-4.81zM86.59 48.11h4.81v4.81h-4.81zM96.22 48.11h9.62v4.81h-9.62zM110.65 48.11h14.43v4.81h-14.43zM129.89 48.11h9.62v4.81h-9.62zM168.38 48.11h4.81v4.81h-4.81zM9.62 52.92h9.62v4.81h-9.62zM24.05 52.92h4.81v4.81h-4.81zM38.49 52.92h9.62v4.81h-9.62zM52.92 52.92h9.62v4.81h-9.62zM67.35 52.92h4.81v4.81h-4.81zM76.97 52.92h9.62v4.81h-9.62zM91.41 52.92h9.62v4.81h-9.62zM115.46 52.92h4.81v4.81h-4.81zM139.51 52.92h19.24v4.81h-19.24zM173.19 52.92h4.81v4.81h-4.81zM0.00 57.73h9.62v4.81h-9.62zM24.05 57.73h9.62v4.81h-9.62zM38.49 57.73h4.81v4.81h-4.81zM48.11 57.73h9.62v4.81h-9.62zM62.54 57.73h4.81v4.81h-4.81zM72.16 57.73h4.81v4.81h-4.81zM86.59 57.73h9.62v4.81h-9.62zM101.03 57.73h14.43v4.81h-14.43zM120.27 57.73h4.81v4.81h-4.81zM149.14 57.73h4.81v4.81h-4.81zM173.19 57.73h4.81v4.81h-4.81zM19.24 62.54h4.81v4.81h-4.81zM48.11 62.54h4.81v4.81h-4.81zM57.73 62.54h24.05v4.81h-24.05zM91.41 62.54h4.81v4.81h-4.81zM105.84 62.54h4.81v4.81h-4.81zM125.08 62.54h4.81v4.81h-4.81zM153.95 62.54h4.81v4.81h-4.81zM168.38 62.54h9.62v4.81h-9.62zM0.00 67.35h24.05v4.81h-24.05zM62.54 67.35h4.81v4.81h-4.81zM76.97 67.35h4.81v4.81h-4.81zM86.59 67.35h19.24v4.81h-19.24zM110.65 67.35h4.81v4.81h-4.81zM120.27 67.35h4.81v4.81h-4.81zM134.70 67.35h9.62v4.81h-9.62zM153.95 67.35h4.81v4.81h-4.81zM163.57 67.35h14.43v4.81h-14.43zM0.00 72.16h9.62v4.81h-9.62zM14.43 72.16h4.81v4.81h-4.81zM28.86 72.16h4.81v4.81h-4.81zM43.30 72.16h4.81v4.81h-4.81zM52.92 72.16h9.62v4.81h-9.62zM67.35 72.16h4.81v4.81h-4.81zM86.59 72.16h4.81v4.81h-4.81zM105.84 72.16h4.81v4.81h-4.81zM115.46 72.16h14.43v4.81h-14.43zM134.70 72.16h9.62v4.81h-9.62zM149.14 72.16h9.62v4.81h-9.62zM163.57 72.16h4.81v4.81h-4.81zM14.43 76.97h9.62v4.81h-9.62zM38.49 76.97h9.62v4.81h-9.62zM72.16 76.97h9.62v4.81h-9.62zM96.22 76.97h19.24v4.81h-19.24zM120.27 76.97h4.81v4.81h-4.81zM129.89 76.97h9.62v4.81h-9.62zM153.95 76.97h19.24v4.81h-19.24zM4.81 81.78h9.62v4.81h-9.62zM28.86 81.78h14.43v4.81h-14.43zM48.11 81.78h4.81v4.81h-4.81zM62.54 81.78h4.81v4.81h-4.81zM81.78 81.78h14.43v4.81h-14.43zM101.03 81.78h9.62v4.81h-9.62zM115.46 81.78h4.81v4.81h-4.81zM125.08 81.78h4.81v4.81h-4.81zM134.70 81.78h9.62v4.81h-9.62zM149.14 81.78h9.62v4.81h-9.62zM168.38 81.78h9.62v4.81h-9.62zM0.00 86.59h4.81v4.81h-4.81zM9.62 86.59h9.62v4.81h-9.62zM43.30 86.59h4.81v4.81h-4.81zM52.92 86.59h14.43v4.81h-14.43zM76.97 86.59h33.68v4.81h-33.68zM134.70 86.59h4.81v4.81h-4.81zM149.14 86.59h9.62v4.81h-9.62zM9.62 91.41h4.81v4.81h-4.81zM24.05 91.41h9.62v4.81h-9.62zM43.30 91.41h4.81v4.81h-4.81zM52.92 91.41h4.81v4.81h-4.81zM67.35 91.41h9.62v4.81h-9.62zM91.41 91.41h9.62v4.81h-9.62zM110.65 91.41h4.81v4.81h-4.81zM134.70 91.41h4.81v4.81h-4.81zM14.43 96.22h14.43v4.81h-14.43zM38.49 96.22h24.05v4.81h-24.05zM67.35 96.22h14.43v4.81h-14.43zM91.41 96.22h14.43v4.81h-14.43zM115.46 96.22h24.05v4.81h-24.05zM149.14 96.22h19.24v4.81h-19.24zM173.19 96.22h4.81v4.81h-4.81zM9.62 101.03h9.62v4.81h-9.62zM28.86 101.03h4.81v4.81h-4.81zM43.30 101.03h14.43v4.81h-14.43zM67.35 101.03h4.81v4.81h-4.81zM81.78 101.03h4.81v4.81h-4.81zM96.22 101.03h19.24v4.81h-19.24zM129.89 101.03h19.24v4.81h-19.24zM168.38 101.03h4.81v4.81h-4.81zM0.00 105.84h4.81v4.81h-4.81zM9.62 105.84h4.81v4.81h-4.81zM28.86 105.84h9.62v4.81h-9.62zM43.30 105.84h14.43v4.81h-14.43zM72.16 105.84h4.81v4.81h-4.81zM81.78 105.84h4.81v4.81h-4.81zM91.41 105.84h4.81v4.81h-4.81zM101.03 105.84h4.81v4.81h-4.81zM115.46 105.84h4.81v4.81h-4.81zM125.08 105.84h24.05v4.81h-24.05zM153.95 105.84h4.81v4.81h-4.81zM163.57 105.84h14.43v4.81h-14.43zM14.43 110.65h9.62v4.81h-9.62zM28.86 110.65h4.81v4.81h-4.81zM38.49 110.65h9.62v4.81h-9.62zM57.73 110.65h4.81v4.81h-4.81zM67.35 110.65h9.62v4.81h-9.62zM81.78 110.65h14.43v4.81h-14.43zM101.03 110.65h9.62v4.81h-9.62zM115.46 110.65h4.81v4.81h-4.81zM134.70 110.65h4.81v4.81h-4.81zM144.32 110.65h14.43v4.81h-14.43zM168.38 110.65h9.62v4.81h-9.62zM9.62 115.46h28.86v4.81h-28.86zM43.30 115.46h4.81v4.81h-4.81zM67.35 115.46h24.05v4.81h-24.05zM115.46 115.46h14.43v4.81h-14.43zM134.70 115.46h9.62v4.81h-9.62zM163.57 115.46h4.81v4.81h-4.81zM4.81 120.27h4.81v4.81h-4.81zM14.43 120.27h4.81v4.81h-4.81zM43.30 120.27h4.81v4.81h-4.81zM57.73 120.27h14.43v4.81h-14.43zM81.78 120.27h4.81v4.81h-4.81zM91.41 120.27h14.43v4.81h-14.43zM110.65 120.27h4.81v4.81h-4.81zM134.70 120.27h4.81v4.81h-4.81zM158.76 120.27h4.81v4.81h-4.81zM168.38 120.27h4.81v4.81h-4.81zM0.00 125.08h4.81v4.81h-4.81zM14.43 125.08h4.81v4.81h-4.81zM24.05 125.08h14.43v4.81h-14.43zM52.92 125.08h4.81v4.81h-4.81zM67.35 125.08h4.81v4.81h-4.81zM81.78 125.08h24.05v4.81h-24.05zM110.65 125.08h4.81v4.81h-4.81zM120.27 125.08h4.81v4.81h-4.81zM129.89 125.08h4.81v4.81h-4.81zM139.51 125.08h4.81v4.81h-4.81zM149.14 125.08h4.81v4.81h-4.81zM163.57 125.08h9.62v4.81h-9.62zM14.43 129.89h4.81v4.81h-4.81zM33.68 129.89h9.62v4.81h-9.62zM62.54 129.89h4.81v4.81h-4.81zM72.16 129.89h9.62v4.81h-9.62zM105.84 129.89h4.81v4.81h-4.81zM115.46 129.89h14.43v4.81h-14.43zM134.70 129.89h9.62v4.81h-9.62zM153.95 129.89h24.05v4.81h-24.05zM19.24 134.70h4.81v4.81h-4.81zM28.86 134.70h4.81v4.81h-4.81zM48.11 134.70h4.81v4.81h-4.81zM57.73 134.70h4.81v4.81h-4.81zM72.16 134.70h24.05v4.81h-24.05zM105.84 134.70h9.62v4.81h-9.62zM120.27 134.70h9.62v4.81h-9.62zM134.70 134.70h9.62v4.81h-9.62zM153.95 134.70h14.43v4.81h-14.43zM43.30 139.51h4.81v4.81h-4.81zM52.92 139.51h9.62v4.81h-9.62zM67.35 139.51h4.81v4.81h-4.81zM86.59 139.51h4.81v4.81h-4.81zM101.03 139.51h19.24v4.81h-19.24zM125.08 139.51h14.43v4.81h-14.43zM149.14 139.51h4.81v4.81h-4.81zM168.38 139.51h9.62v4.81h-9.62zM0.00 144.32h33.68v4.81h-33.68zM43.30 144.32h4.81v4.81h-4.81zM52.92 144.32h9.62v4.81h-9.62zM67.35 144.32h9.62v4.81h-9.62zM81.78 144.32h9.62v4.81h-9.62zM96.22 144.32h4.81v4.81h-4.81zM110.65 144.32h9.62v4.81h-9.62zM125.08 144.32h4.81v4.81h-4.81zM134.70 144.32h9.62v4.81h-9.62zM153.95 144.32h4.81v4.81h-4.81zM0.00 149.14h4.81v4.81h-4.81zM28.86 149.14h4.81v4.81h-4.81zM38.49 149.14h9.62v4.81h-9.62zM62.54 149.14h14.43v4.81h-14.43zM81.78 149.14h9.62v4.81h-9.62zM110.65 149.14h33.68v4.81h-33.68zM149.14 149.14h4.81v4.81h-4.81zM173.19 149.14h4.81v4.81h-4.81zM0.00 153.95h4.81v4.81h-4.81zM9.62 153.95h14.43v4.81h-14.43zM28.86 153.95h4.81v4.81h-4.81zM38.49 153.95h4.81v4.81h-4.81zM48.11 153.95h14.43v4.81h-14.43zM76.97 153.95h19.24v4.81h-19.24zM101.03 153.95h9.62v4.81h-9.62zM120.27 153.95h9.62v4.81h-9.62zM134.70 153.95h9.62v4.81h-9.62zM149.14 153.95h28.86v4.81h-28.86zM0.00 158.76h4.81v4.81h-4.81zM9.62 158.76h14.43v4.81h-14.43zM28.86 158.76h4.81v4.81h-4.81zM43.30 158.76h9.62v4.81h-9.62zM62.54 158.76h9.62v4.81h-9.62zM76.97 158.76h9.62v4.81h-9.62zM105.84 158.76h9.62v4.81h-9.62zM120.27 158.76h4.81v4.81h-4.81zM129.89 158.76h14.43v4.81h-14.43zM149.14 158.76h28.86v4.81h-28.86zM0.00 163.57h4.81v4.81h-4.81zM9.62 163.57h14.43v4.81h-14.43zM28.86 163.57h4.81v4.81h-4.81zM38.49 163.57h24.05v4.81h-24.05zM72.16 163.57h14.43v4.81h-14.43zM91.41 163.57h4.81v4.81h-4.81zM110.65 163.57h19.24v4.81h-19.24zM134.70 163.57h4.81v4.81h-4.81zM149.14 163.57h24.05v4.81h-24.05zM0.00 168.38h4.81v4.81h-4.81zM28.86 168.38h4.81v4.81h-4.81zM43.30 168.38h14.43v4.81h-14.43zM62.54 168.38h9.62v4.81h-9.62zM76.97 168.38h28.86v4.81h-28.86zM125.08 168.38h4.81v4.81h-4.81zM139.51 168.38h4.81v4.81h-4.81zM163.57 168.38h4.81v4.81h-4.81zM173.19 168.38h4.81v4.81h-4.81zM0.00 173.19h33.68v4.81h-33.68zM38.49 173.19h14.43v4.81h-14.43zM57.73 173.19h24.05v4.81h-24.05zM101.03 173.19h33.68v4.81h-33.68zM139.51 173.19h24.05v4.81h-24.05zM173.19 173.19h4.81v4.81h-4.81z" fill="#000"/></svg>
<svg style="left:1667px;top:560px;" width="179" height="179" viewBox="0 0 179 179"><path d="M0.00 0.00h33.86v4.84h-33.86zM43.54 0.00h4.84v4.84h-4.84zM53.22 0.00h4.84v4.84h-4.84zM82.24 0.00h4.84v4.84h-4.84zM96.76 0.00h9.68v4.84h-9.68zM145.14 0.00h33.86v4.84h-33.86zM0.00 4.84h4.84v4.84h-4.84zM29.03 4.84h4.84v4.84h-4.84zM43.54 4.84h4.84v4.84h-4.84zM58.05 4.84h9.68v4.84h-9.68zM72.57 4.84h4.84v4.84h-4.84zM87.08 4.84h4.84v4.84h-4.84zM101.59 4.84h4.84v4.84h-4.84zM111.27 4.84h14.51v4.84h-14.51zM145.14 4.84h4.84v4.84h-4.84zM174.16 4.84h4.84v4.84h-4.84zM0.00 9.68h4.84v4.84h-4.84zM9.68 9.68h14.51v4.84h-14.51zM29.03 9.68h4.84v4.84h-4.84zM38.70 9.68h4.84v4.84h-4.84zM53.22 9.68h4.84v4.84h-4.84zM62.89 9.68h4.84v4.84h-4.84zM87.08 9.68h4.84v4.84h-4.84zM101.59 9.68h4.84v4.84h-4.84zM125.78 9.68h4.84v4.84h-4.84zM145.14 9.68h4.84v4.84h-4.84zM154.81 9.68h14.51v4.84h-14.51zM174.16 9.68h4.84v4.84h-4.84zM0.00 14.51h4.84v4.84h-4.84zM9.68 14.51h14.51v4.84h-14.51zM29.03 14.51h4.84v4.84h-4.84zM38.70 14.51h9.68v4.84h-9.68zM62.89 14.51h9.68v4.84h-9.68zM77.41 14.51h19.35v4.84h-19.35zM106.43 14.51h24.19v4.84h-24.19zM135.46 14.51h4.84v4.84h-4.84zM145.14 14.51h4.84v4.84h-4.84zM154.81 14.51h14.51v4.84h-14.51zM174.16 14.51h4.84v4.84h-4.84zM0.00 19.35h4.84v4.84h-4.84zM9.68 19.35h14.51v4.84h-14.51zM29.03 19.35h4.84v4.84h-4.84zM38.70 19.35h4.84v4.84h-4.84zM53.22 19.35h9.68v4.84h-9.68zM67.73 19.35h4.84v4.84h-4.84zM87.08 19.35h4.84v4.84h-4.84zM101.59 19.35h14.51v4.84h-14.51zM145.14 19.35h4.84v4.84h-4.84zM154.81 19.35h14.51v4.84h-14.51zM174.16 19.35h4.84v4.84h-4.84zM0.00 24.19h4.84v4.84h-4.84zM29.03 24.19h4.84v4.84h-4.84zM53.22 24.19h4.84v4.84h-4.84zM77.41 24.19h14.51v4.84h-14.51zM106.43 24.19h4.84v4.84h-4.84zM120.95 24.19h4.84v4.84h-4.84zM145.14 24.19h4.84v4.84h-4.84zM174.16 24.19h4.84v4.84h-4.84zM0.00 29.03h33.86v4.84h-33.86zM38.70 29.03h9.68v4.84h-9.68zM53.22 29.03h4.84v4.84h-4.84zM72.57 29.03h9.68v4.84h-9.68zM91.92 29.03h29.03v4.84h-29.03zM130.62 29.03h9.68v4.84h-9.68zM145.14 29.03h33.86v4.84h-33.86zM38.70 33.86h14.51v4.84h-14.51zM58.05 33.86h9.68v4.84h-9.68zM77.41 33.86h4.84v4.84h-4.84zM91.92 33.86h9.68v4.84h-9.68zM111.27 33.86h9.68v4.84h-9.68zM125.78 33.86h9.68v4.84h-9.68zM9.68 38.70h4.84v4.84h-4.84zM19.35 38.70h4.84v4.84h-4.84zM29.03 38.70h4.84v4.84h-4.84zM43.54 38.70h14.51v4.84h-14.51zM62.89 38.70h4.84v4.84h-4.84zM72.57 38.70h4.84v4.84h-4.84zM82.24 38.70h4.84v4.84h-4.84zM96.76 38.70h14.51v4.84h-14.51zM116.11 38.70h14.51v4.84h-14.51zM135.46 38.70h4.84v4.84h-4.84zM149.97 38.70h29.03v4.84h-29.03zM4.84 43.54h14.51v4.84h-14.51zM29.03 43.54h9.68v4.84h-9.68zM43.54 43.54h14.51v4.84h-14.51zM77.41 43.54h9.68v4.84h-9.68zM91.92 43.54h4.84v4.84h-4.84zM101.59 43.54h14.51v4.84h-14.51zM120.95 43.54h4.84v4.84h-4.84zM154.81 43.54h4.84v4.84h-4.84zM169.32 43.54h9.68v4.84h-9.68zM0.00 48.38h4.84v4.84h-4.84zM14.51 48.38h9.68v4.84h-9.68zM33.86 48.38h9.68v4.84h-9.68zM48.38 48.38h4.84v4.84h-4.84zM58.05 48.38h4.84v4.84h-4.84zM67.73 48.38h24.19v4.84h-24.19zM106.43 48.38h4.84v4.84h-4.84zM120.95 48.38h33.86v4.84h-33.86zM159.65 48.38h4.84v4.84h-4.84zM174.16 48.38h4.84v4.84h-4.84zM19.35 53.22h19.35v4.84h-19.35zM48.38 53.22h33.86v4.84h-33.86zM87.08 53.22h4.84v4.84h-4.84zM96.76 53.22h9.68v4.84h-9.68zM111.27 53.22h24.19v4.84h-24.19zM140.30 53.22h4.84v4.84h-4.84zM149.97 53.22h19.35v4.84h-19.35zM174.16 53.22h4.84v4.84h-4.84zM0.00 58.05h14.51v4.84h-14.51zM24.19 58.05h14.51v4.84h-14.51zM43.54 58.05h9.68v4.84h-9.68zM58.05 58.05h4.84v4.84h-4.84zM77.41 58.05h9.68v4.84h-9.68zM91.92 58.05h4.84v4.84h-4.84zM101.59 58.05h24.19v4.84h-24.19zM130.62 58.05h4.84v4.84h-4.84zM145.14 58.05h9.68v4.84h-9.68zM0.00 62.89h9.68v4.84h-9.68zM14.51 62.89h14.51v4.84h-14.51zM33.86 62.89h14.51v4.84h-14.51zM53.22 62.89h9.68v4.84h-9.68zM67.73 62.89h9.68v4.84h-9.68zM91.92 62.89h24.19v4.84h-24.19zM125.78 62.89h9.68v4.84h-9.68zM149.97 62.89h4.84v4.84h-4.84zM169.32 62.89h4.84v4.84h-4.84zM4.84 67.73h19.35v4.84h-19.35zM29.03 67.73h4.84v4.84h-4.84zM43.54 67.73h19.35v4.84h-19.35zM106.43 67.73h9.68v4.84h-9.68zM120.95 67.73h4.84v4.84h-4.84zM149.97 67.73h9.68v4.84h-9.68zM0.00 72.57h4.84v4.84h-4.84zM9.68 72.57h9.68v4.84h-9.68zM24.19 72.57h29.03v4.84h-29.03zM58.05 72.57h14.51v4.84h-14.51zM91.92 72.57h4.84v4.84h-4.84zM101.59 72.57h9.68v4.84h-9.68zM120.95 72.57h4.84v4.84h-4.84zM130.62 72.57h4.84v4.84h-4.84zM159.65 72.57h4.84v4.84h-4.84zM0.00 77.41h4.84v4.84h-4.84zM9.68 77.41h14.51v4.84h-14.51zM33.86 77.41h38.70v4.84h-38.70zM96.76 77.41h9.68v4.84h-9.68zM120.95 77.41h9.68v4.84h-9.68zM140.30 77.41h14.51v4.84h-14.51zM164.49 77.41h4.84v4.84h-4.84zM4.84 82.24h19.35v4.84h-19.35zM29.03 82.24h4.84v4.84h-4.84zM48.38 82.24h4.84v4.84h-4.84zM62.89 82.24h9.68v4.84h-9.68zM82.24 82.24h14.51v4.84h-14.51zM106.43 82.24h4.84v4.84h-4.84zM120.95 82.24h4.84v4.84h-4.84zM140.30 82.24h4.84v4.84h-4.84zM174.16 82.24h4.84v4.84h-4.84zM0.00 87.08h9.68v4.84h-9.68zM14.51 87.08h9.68v4.84h-9.68zM29.03 87.08h9.68v4.84h-9.68zM43.54 87.08h9.68v4.84h-9.68zM58.05 87.08h9.68v4.84h-9.68zM91.92 87.08h14.51v4.84h-14.51zM111.27 87.08h4.84v4.84h-4.84zM120.95 87.08h4.84v4.84h-4.84zM130.62 87.08h4.84v4.84h-4.84zM140.30 87.08h4.84v4.84h-4.84zM149.97 87.08h9.68v4.84h-9.68zM164.49 87.08h14.51v4.84h-14.51zM24.19 91.92h9.68v4.84h-9.68zM48.38 91.92h4.84v4.84h-4.84zM62.89 91.92h4.84v4.84h-4.84zM77.41 91.92h9.68v4.84h-9.68zM101.59 91.92h9.68v4.84h-9.68zM116.11 91.92h9.68v4.84h-9.68zM130.62 91.92h9.68v4.84h-9.68zM154.81 91.92h4.84v4.84h-4.84zM29.03 96.76h4.84v4.84h-4.84zM38.70 96.76h14.51v4.84h-14.51zM67.73 96.76h9.68v4.84h-9.68zM87.08 96.76h4.84v4.84h-4.84zM101.59 96.76h24.19v4.84h-24.19zM130.62 96.76h4.84v4.84h-4.84zM140.30 96.76h4.84v4.84h-4.84zM159.65 96.76h4.84v4.84h-4.84zM174.16 96.76h4.84v4.84h-4.84zM0.00 101.59h9.68v4.84h-9.68zM19.35 101.59h19.35v4.84h-19.35zM53.22 101.59h4.84v4.84h-4.84zM67.73 101.59h4.84v4.84h-4.84zM101.59 101.59h4.84v4.84h-4.84zM111.27 101.59h14.51v4.84h-14.51zM135.46 101.59h9.68v4.84h-9.68zM149.97 101.59h4.84v4.84h-4.84zM159.65 101.59h4.84v4.84h-4.84zM169.32 101.59h4.84v4.84h-4.84zM0.00 106.43h43.54v4.84h-43.54zM48.38 106.43h4.84v4.84h-4.84zM62.89 106.43h4.84v4.84h-4.84zM77.41 106.43h9.68v4.84h-9.68zM91.92 106.43h9.68v4.84h-9.68zM106.43 106.43h19.35v4.84h-19.35zM130.62 106.43h33.86v4.84h-33.86zM9.68 111.27h4.84v4.84h-4.84zM19.35 111.27h4.84v4.84h-4.84zM29.03 111.27h4.84v4.84h-4.84zM53.22 111.27h4.84v4.84h-4.84zM72.57 111.27h4.84v4.84h-4.84zM87.08 111.27h9.68v4.84h-9.68zM106.43 111.27h4.84v4.84h-4.84zM116.11 111.27h4.84v4.84h-4.84zM140.30 111.27h4.84v4.84h-4.84zM149.97 111.27h4.84v4.84h-4.84zM169.32 111.27h4.84v4.84h-4.84zM0.00 116.11h4.84v4.84h-4.84zM9.68 116.11h9.68v4.84h-9.68zM24.19 116.11h19.35v4.84h-19.35zM48.38 116.11h4.84v4.84h-4.84zM58.05 116.11h9.68v4.84h-9.68zM72.57 116.11h9.68v4.84h-9.68zM87.08 116.11h4.84v4.84h-4.84zM106.43 116.11h4.84v4.84h-4.84zM120.95 116.11h14.51v4.84h-14.51zM140.30 116.11h4.84v4.84h-4.84zM159.65 116.11h4.84v4.84h-4.84zM169.32 116.11h9.68v4.84h-9.68zM0.00 120.95h4.84v4.84h-4.84zM9.68 120.95h14.51v4.84h-14.51zM29.03 120.95h14.51v4.84h-14.51zM53.22 120.95h4.84v4.84h-4.84zM67.73 120.95h4.84v4.84h-4.84zM87.08 120.95h4.84v4.84h-4.84zM96.76 120.95h9.68v4.84h-9.68zM120.95 120.95h14.51v4.84h-14.51zM145.14 120.95h9.68v4.84h-9.68zM164.49 120.95h9.68v4.84h-9.68zM4.84 125.78h4.84v4.84h-4.84zM24.19 125.78h9.68v4.84h-9.68zM58.05 125.78h9.68v4.84h-9.68zM77.41 125.78h9.68v4.84h-9.68zM91.92 125.78h4.84v4.84h-4.84zM101.59 125.78h4.84v4.84h-4.84zM111.27 125.78h4.84v4.84h-4.84zM130.62 125.78h4.84v4.84h-4.84zM159.65 125.78h9.68v4.84h-9.68zM174.16 125.78h4.84v4.84h-4.84zM4.84 130.62h4.84v4.84h-4.84zM14.51 130.62h4.84v4.84h-4.84zM43.54 130.62h19.35v4.84h-19.35zM67.73 130.62h4.84v4.84h-4.84zM87.08 130.62h4.84v4.84h-4.84zM101.59 130.62h4.84v4.84h-4.84zM116.11 130.62h4.84v4.84h-4.84zM125.78 130.62h14.51v4.84h-14.51zM174.16 130.62h4.84v4.84h-4.84zM0.00 135.46h4.84v4.84h-4.84zM14.51 135.46h38.70v4.84h-38.70zM58.05 135.46h33.86v4.84h-33.86zM96.76 135.46h4.84v4.84h-4.84zM106.43 135.46h4.84v4.84h-4.84zM116.11 135.46h9.68v4.84h-9.68zM135.46 135.46h14.51v4.84h-14.51zM154.81 135.46h14.51v4.84h-14.51zM43.54 140.30h33.86v4.84h-33.86zM82.24 140.30h4.84v4.84h-4.84zM91.92 140.30h4.84v4.84h-4.84zM111.27 140.30h9.68v4.84h-9.68zM130.62 140.30h4.84v4.84h-4.84zM149.97 140.30h4.84v4.84h-4.84zM159.65 140.30h19.35v4.84h-19.35zM0.00 145.14h33.86v4.84h-33.86zM38.70 145.14h4.84v4.84h-4.84zM53.22 145.14h4.84v4.84h-4.84zM62.89 145.14h4.84v4.84h-4.84zM72.57 145.14h19.35v4.84h-19.35zM96.76 145.14h9.68v4.84h-9.68zM111.27 145.14h9.68v4.84h-9.68zM145.14 145.14h9.68v4.84h-9.68zM159.65 145.14h19.35v4.84h-19.35zM0.00 149.97h4.84v4.84h-4.84zM29.03 149.97h4.84v4.84h-4.84zM67.73 149.97h4.84v4.84h-4.84zM77.41 149.97h4.84v4.84h-4.84zM91.92 149.97h14.51v4.84h-14.51zM111.27 149.97h9.68v4.84h-9.68zM135.46 149.97h4.84v4.84h-4.84zM149.97 149.97h4.84v4.84h-4.84zM159.65 149.97h9.68v4.84h-9.68zM0.00 154.81h4.84v4.84h-4.84zM9.68 154.81h14.51v4.84h-14.51zM29.03 154.81h4.84v4.84h-4.84zM38.70 154.81h9.68v4.84h-9.68zM53.22 154.81h4.84v4.84h-4.84zM67.73 154.81h14.51v4.84h-14.51zM135.46 154.81h4.84v4.84h-4.84zM169.32 154.81h4.84v4.84h-4.84zM0.00 159.65h4.84v4.84h-4.84zM9.68 159.65h14.51v4.84h-14.51zM29.03 159.65h4.84v4.84h-4.84zM58.05 159.65h4.84v4.84h-4.84zM72.57 159.65h14.51v4.84h-14.51zM96.76 159.65h4.84v4.84h-4.84zM106.43 159.65h29.03v4.84h-29.03zM140.30 159.65h9.68v4.84h-9.68zM154.81 159.65h19.35v4.84h-19.35zM0.00 164.49h4.84v4.84h-4.84zM9.68 164.49h14.51v4.84h-14.51zM29.03 164.49h4.84v4.84h-4.84zM38.70 164.49h4.84v4.84h-4.84zM58.05 164.49h19.35v4.84h-19.35zM82.24 164.49h4.84v4.84h-4.84zM96.76 164.49h14.51v4.84h-14.51zM120.95 164.49h4.84v4.84h-4.84zM130.62 164.49h9.68v4.84h-9.68zM145.14 164.49h33.86v4.84h-33.86zM0.00 169.32h4.84v4.84h-4.84zM29.03 169.32h4.84v4.84h-4.84zM38.70 169.32h4.84v4.84h-4.84zM48.38 169.32h4.84v4.84h-4.84zM82.24 169.32h14.51v4.84h-14.51zM106.43 169.32h4.84v4.84h-4.84zM116.11 169.32h4.84v4.84h-4.84zM169.32 169.32h4.84v4.84h-4.84zM0.00 174.16h33.86v4.84h-33.86zM43.54 174.16h4.84v4.84h-4.84zM53.22 174.16h9.68v4.84h-9.68zM67.73 174.16h4.84v4.84h-4.84zM82.24 174.16h19.35v4.84h-19.35zM111.27 174.16h4.84v4.84h-4.84zM130.62 174.16h4.84v4.84h-4.84zM140.30 174.16h4.84v4.84h-4.84zM149.97 174.16h14.51v4.84h-14.51zM169.32 174.16h4.84v4.84h-4.84z" fill="#000"/></svg>
<svg style="left:1876px;top:579px;" width="179" height="179" viewBox="0 0 179 179"><path d="M0.00 0.00h33.86v4.84h-33.86zM62.89 0.00h4.84v4.84h-4.84zM77.41 0.00h19.35v4.84h-19.35zM106.43 0.00h4.84v4.84h-4.84zM130.62 0.00h9.68v4.84h-9.68zM145.14 0.00h33.86v4.84h-33.86zM0.00 4.84h4.84v4.84h-4.84zM29.03 4.84h4.84v4.84h-4.84zM53.22 4.84h38.70v4.84h-38.70zM96.76 4.84h14.51v4.84h-14.51zM120.95 4.84h19.35v4.84h-19.35zM145.14 4.84h4.84v4.84h-4.84zM174.16 4.84h4.84v4.84h-4.84zM0.00 9.68h4.84v4.84h-4.84zM9.68 9.68h14.51v4.84h-14.51zM29.03 9.68h4.84v4.84h-4.84zM38.70 9.68h9.68v4.84h-9.68zM53.22 9.68h4.84v4.84h-4.84zM67.73 9.68h14.51v4.84h-14.51zM87.08 9.68h14.51v4.84h-14.51zM111.27 9.68h4.84v4.84h-4.84zM135.46 9.68h4.84v4.84h-4.84zM145.14 9.68h4.84v4.84h-4.84zM154.81 9.68h14.51v4.84h-14.51zM174.16 9.68h4.84v4.84h-4.84zM0.00 14.51h4.84v4.84h-4.84zM9.68 14.51h14.51v4.84h-14.51zM29.03 14.51h4.84v4.84h-4.84zM43.54 14.51h4.84v4.84h-4.84zM72.57 14.51h4.84v4.84h-4.84zM82.24 14.51h4.84v4.84h-4.84zM96.76 14.51h14.51v4.84h-14.51zM120.95 14.51h14.51v4.84h-14.51zM145.14 14.51h4.84v4.84h-4.84zM154.81 14.51h14.51v4.84h-14.51zM174.16 14.51h4.84v4.84h-4.84zM0.00 19.35h4.84v4.84h-4.84zM9.68 19.35h14.51v4.84h-14.51zM29.03 19.35h4.84v4.84h-4.84zM38.70 19.35h29.03v4.84h-29.03zM77.41 19.35h4.84v4.84h-4.84zM87.08 19.35h33.86v4.84h-33.86zM125.78 19.35h14.51v4.84h-14.51zM145.14 19.35h4.84v4.84h-4.84zM154.81 19.35h14.51v4.84h-14.51zM174.16 19.35h4.84v4.84h-4.84zM0.00 24.19h4.84v4.84h-4.84zM29.03 24.19h4.84v4.84h-4.84zM48.38 24.19h4.84v4.84h-4.84zM58.05 24.19h4.84v4.84h-4.84zM67.73 24.19h9.68v4.84h-9.68zM82.24 24.19h4.84v4.84h-4.84zM91.92 24.19h4.84v4.84h-4.84zM111.27 24.19h4.84v4.84h-4.84zM130.62 24.19h9.68v4.84h-9.68zM145.14 24.19h4.84v4.84h-4.84zM174.16 24.19h4.84v4.84h-4.84zM0.00 29.03h33.86v4.84h-33.86zM43.54 29.03h4.84v4.84h-4.84zM67.73 29.03h4.84v4.84h-4.84zM87.08 29.03h4.84v4.84h-4.84zM96.76 29.03h4.84v4.84h-4.84zM111.27 29.03h9.68v4.84h-9.68zM125.78 29.03h14.51v4.84h-14.51zM145.14 29.03h33.86v4.84h-33.86zM38.70 33.86h4.84v4.84h-4.84zM48.38 33.86h4.84v4.84h-4.84zM72.57 33.86h4.84v4.84h-4.84zM82.24 33.86h14.51v4.84h-14.51zM106.43 33.86h4.84v4.84h-4.84zM116.11 33.86h14.51v4.84h-14.51zM135.46 33.86h4.84v4.84h-4.84zM4.84 38.70h4.84v4.84h-4.84zM14.51 38.70h19.35v4.84h-19.35zM43.54 38.70h9.68v4.84h-9.68zM58.05 38.70h19.35v4.84h-19.35zM82.24 38.70h4.84v4.84h-4.84zM91.92 38.70h4.84v4.84h-4.84zM106.43 38.70h4.84v4.84h-4.84zM125.78 38.70h9.68v4.84h-9.68zM140.30 38.70h9.68v4.84h-9.68zM154.81 38.70h4.84v4.84h-4.84zM169.32 38.70h4.84v4.84h-4.84zM0.00 43.54h9.68v4.84h-9.68zM19.35 43.54h4.84v4.84h-4.84zM29.03 43.54h4.84v4.84h-4.84zM38.70 43.54h4.84v4.84h-4.84zM48.38 43.54h4.84v4.84h-4.84zM77.41 43.54h4.84v4.84h-4.84zM125.78 43.54h4.84v4.84h-4.84zM135.46 43.54h4.84v4.84h-4.84zM164.49 43.54h9.68v4.84h-9.68zM4.84 48.38h9.68v4.84h-9.68zM24.19 48.38h14.51v4.84h-14.51zM48.38 48.38h4.84v4.84h-4.84zM58.05 48.38h9.68v4.84h-9.68zM77.41 48.38h4.84v4.84h-4.84zM87.08 48.38h9.68v4.84h-9.68zM101.59 48.38h14.51v4.84h-14.51zM120.95 48.38h9.68v4.84h-9.68zM140.30 48.38h4.84v4.84h-4.84zM169.32 48.38h9.68v4.84h-9.68zM0.00 53.22h14.51v4.84h-14.51zM19.35 53.22h24.19v4.84h-24.19zM53.22 53.22h4.84v4.84h-4.84zM62.89 53.22h9.68v4.84h-9.68zM82.24 53.22h4.84v4.84h-4.84zM91.92 53.22h14.51v4.84h-14.51zM125.78 53.22h4.84v4.84h-4.84zM154.81 53.22h9.68v4.84h-9.68zM169.32 53.22h9.68v4.84h-9.68zM0.00 58.05h14.51v4.84h-14.51zM19.35 58.05h9.68v4.84h-9.68zM38.70 58.05h4.84v4.84h-4.84zM48.38 58.05h14.51v4.84h-14.51zM96.76 58.05h9.68v4.84h-9.68zM130.62 58.05h14.51v4.84h-14.51zM154.81 58.05h14.51v4.84h-14.51zM4.84 62.89h9.68v4.84h-9.68zM19.35 62.89h9.68v4.84h-9.68zM33.86 62.89h9.68v4.84h-9.68zM58.05 62.89h4.84v4.84h-4.84zM72.57 62.89h9.68v4.84h-9.68zM87.08 62.89h4.84v4.84h-4.84zM101.59 62.89h4.84v4.84h-4.84zM116.11 62.89h4.84v4.84h-4.84zM130.62 62.89h9.68v4.84h-9.68zM154.81 62.89h9.68v4.84h-9.68zM174.16 62.89h4.84v4.84h-4.84zM0.00 67.73h14.51v4.84h-14.51zM24.19 67.73h4.84v4.84h-4.84zM33.86 67.73h4.84v4.84h-4.84zM62.89 67.73h9.68v4.84h-9.68zM77.41 67.73h4.84v4.84h-4.84zM87.08 67.73h9.68v4.84h-9.68zM101.59 67.73h14.51v4.84h-14.51zM120.95 67.73h9.68v4.84h-9.68zM145.14 67.73h4.84v4.84h-4.84zM159.65 67.73h4.84v4.84h-4.84zM169.32 67.73h4.84v4.84h-4.84zM0.00 72.57h4.84v4.84h-4.84zM9.68 72.57h24.19v4.84h-24.19zM38.70 72.57h4.84v4.84h-4.84zM48.38 72.57h9.68v4.84h-9.68zM72.57 72.57h9.68v4.84h-9.68zM87.08 72.57h24.19v4.84h-24.19zM120.95 72.57h4.84v4.84h-4.84zM149.97 72.57h4.84v4.84h-4.84zM164.49 72.57h9.68v4.84h-9.68zM19.35 77.41h4.84v4.84h-4.84zM33.86 77.41h4.84v4.84h-4.84zM48.38 77.41h9.68v4.84h-9.68zM67.73 77.41h4.84v4.84h-4.84zM82.24 77.41h4.84v4.84h-4.84zM91.92 77.41h4.84v4.84h-4.84zM106.43 77.41h33.86v4.84h-33.86zM145.14 77.41h14.51v4.84h-14.51zM164.49 77.41h9.68v4.84h-9.68zM4.84 82.24h4.84v4.84h-4.84zM14.51 82.24h4.84v4.84h-4.84zM24.19 82.24h4.84v4.84h-4.84zM33.86 82.24h4.84v4.84h-4.84zM53.22 82.24h9.68v4.84h-9.68zM77.41 82.24h14.51v4.84h-14.51zM96.76 82.24h4.84v4.84h-4.84zM106.43 82.24h4.84v4.84h-4.84zM125.78 82.24h4.84v4.84h-4.84zM135.46 82.24h9.68v4.84h-9.68zM149.97 82.24h4.84v4.84h-4.84zM159.65 82.24h19.35v4.84h-19.35zM4.84 87.08h4.84v4.84h-4.84zM14.51 87.08h4.84v4.84h-4.84zM24.19 87.08h4.84v4.84h-4.84zM48.38 87.08h4.84v4.84h-4.84zM58.05 87.08h4.84v4.84h-4.84zM91.92 87.08h4.84v4.84h-4.84zM106.43 87.08h19.35v4.84h-19.35zM140.30 87.08h4.84v4.84h-4.84zM0.00 91.92h4.84v4.84h-4.84zM9.68 91.92h43.54v4.84h-43.54zM62.89 91.92h4.84v4.84h-4.84zM77.41 91.92h4.84v4.84h-4.84zM91.92 91.92h4.84v4.84h-4.84zM120.95 91.92h4.84v4.84h-4.84zM135.46 91.92h9.68v4.84h-9.68zM149.97 91.92h4.84v4.84h-4.84zM159.65 91.92h4.84v4.84h-4.84zM0.00 96.76h9.68v4.84h-9.68zM24.19 96.76h4.84v4.84h-4.84zM33.86 96.76h4.84v4.84h-4.84zM43.54 96.76h4.84v4.84h-4.84zM58.05 96.76h4.84v4.84h-4.84zM67.73 96.76h19.35v4.84h-19.35zM91.92 96.76h4.84v4.84h-4.84zM101.59 96.76h9.68v4.84h-9.68zM116.11 96.76h4.84v4.84h-4.84zM135.46 96.76h4.84v4.84h-4.84zM149.97 96.76h4.84v4.84h-4.84zM159.65 96.76h9.68v4.84h-9.68zM0.00 101.59h9.68v4.84h-9.68zM19.35 101.59h4.84v4.84h-4.84zM33.86 101.59h9.68v4.84h-9.68zM58.05 101.59h9.68v4.84h-9.68zM87.08 101.59h4.84v4.84h-4.84zM96.76 101.59h24.19v4.84h-24.19zM125.78 101.59h4.84v4.84h-4.84zM140.30 101.59h4.84v4.84h-4.84zM0.00 106.43h4.84v4.84h-4.84zM9.68 106.43h9.68v4.84h-9.68zM24.19 106.43h9.68v4.84h-9.68zM43.54 106.43h19.35v4.84h-19.35zM67.73 106.43h9.68v4.84h-9.68zM87.08 106.43h4.84v4.84h-4.84zM106.43 106.43h19.35v4.84h-19.35zM130.62 106.43h4.84v4.84h-4.84zM149.97 106.43h9.68v4.84h-9.68zM164.49 106.43h4.84v4.84h-4.84zM14.51 111.27h4.84v4.84h-4.84zM29.03 111.27h14.51v4.84h-14.51zM48.38 111.27h14.51v4.84h-14.51zM67.73 111.27h4.84v4.84h-4.84zM87.08 111.27h9.68v4.84h-9.68zM106.43 111.27h14.51v4.84h-14.51zM125.78 111.27h14.51v4.84h-14.51zM149.97 111.27h9.68v4.84h-9.68zM169.32 111.27h4.84v4.84h-4.84zM0.00 116.11h4.84v4.84h-4.84zM9.68 116.11h4.84v4.84h-4.84zM19.35 116.11h38.70v4.84h-38.70zM67.73 116.11h19.35v4.84h-19.35zM106.43 116.11h24.19v4.84h-24.19zM145.14 116.11h14.51v4.84h-14.51zM164.49 116.11h9.68v4.84h-9.68zM4.84 120.95h4.84v4.84h-4.84zM19.35 120.95h4.84v4.84h-4.84zM33.86 120.95h14.51v4.84h-14.51zM53.22 120.95h4.84v4.84h-4.84zM77.41 120.95h4.84v4.84h-4.84zM87.08 120.95h4.84v4.84h-4.84zM101.59 120.95h4.84v4.84h-4.84zM116.11 120.95h14.51v4.84h-14.51zM140.30 120.95h4.84v4.84h-4.84zM149.97 120.95h9.68v4.84h-9.68zM164.49 120.95h4.84v4.84h-4.84zM174.16 120.95h4.84v4.84h-4.84zM0.00 125.78h4.84v4.84h-4.84zM14.51 125.78h9.68v4.84h-9.68zM29.03 125.78h4.84v4.84h-4.84zM38.70 125.78h4.84v4.84h-4.84zM58.05 125.78h14.51v4.84h-14.51zM77.41 125.78h9.68v4.84h-9.68zM111.27 125.78h4.84v4.84h-4.84zM120.95 125.78h4.84v4.84h-4.84zM130.62 125.78h19.35v4.84h-19.35zM164.49 125.78h14.51v4.84h-14.51zM0.00 130.62h4.84v4.84h-4.84zM14.51 130.62h4.84v4.84h-4.84zM24.19 130.62h4.84v4.84h-4.84zM33.86 130.62h9.68v4.84h-9.68zM48.38 130.62h9.68v4.84h-9.68zM62.89 130.62h4.84v4.84h-4.84zM77.41 130.62h14.51v4.84h-14.51zM96.76 130.62h4.84v4.84h-4.84zM135.46 130.62h9.68v4.84h-9.68zM159.65 130.62h4.84v4.84h-4.84zM174.16 130.62h4.84v4.84h-4.84zM0.00 135.46h14.51v4.84h-14.51zM19.35 135.46h4.84v4.84h-4.84zM29.03 135.46h4.84v4.84h-4.84zM53.22 135.46h19.35v4.84h-19.35zM77.41 135.46h4.84v4.84h-4.84zM91.92 135.46h19.35v4.84h-19.35zM120.95 135.46h4.84v4.84h-4.84zM130.62 135.46h14.51v4.84h-14.51zM154.81 135.46h4.84v4.84h-4.84zM43.54 140.30h4.84v4.84h-4.84zM67.73 140.30h4.84v4.84h-4.84zM82.24 140.30h9.68v4.84h-9.68zM101.59 140.30h9.68v4.84h-9.68zM120.95 140.30h4.84v4.84h-4.84zM145.14 140.30h24.19v4.84h-24.19zM0.00 145.14h33.86v4.84h-33.86zM38.70 145.14h14.51v4.84h-14.51zM58.05 145.14h19.35v4.84h-19.35zM96.76 145.14h4.84v4.84h-4.84zM106.43 145.14h19.35v4.84h-19.35zM130.62 145.14h4.84v4.84h-4.84zM145.14 145.14h9.68v4.84h-9.68zM169.32 145.14h4.84v4.84h-4.84zM0.00 149.97h4.84v4.84h-4.84zM29.03 149.97h4.84v4.84h-4.84zM38.70 149.97h4.84v4.84h-4.84zM48.38 149.97h4.84v4.84h-4.84zM58.05 149.97h9.68v4.84h-9.68zM72.57 149.97h9.68v4.84h-9.68zM91.92 149.97h24.19v4.84h-24.19zM120.95 149.97h19.35v4.84h-19.35zM145.14 149.97h14.51v4.84h-14.51zM164.49 149.97h4.84v4.84h-4.84zM0.00 154.81h4.84v4.84h-4.84zM9.68 154.81h14.51v4.84h-14.51zM29.03 154.81h4.84v4.84h-4.84zM38.70 154.81h14.51v4.84h-14.51zM62.89 154.81h4.84v4.84h-4.84zM77.41 154.81h4.84v4.84h-4.84zM87.08 154.81h14.51v4.84h-14.51zM106.43 154.81h4.84v4.84h-4.84zM116.11 154.81h4.84v4.84h-4.84zM125.78 154.81h14.51v4.84h-14.51zM145.14 154.81h4.84v4.84h-4.84zM154.81 154.81h24.19v4.84h-24.19zM0.00 159.65h4.84v4.84h-4.84zM9.68 159.65h14.51v4.84h-14.51zM29.03 159.65h4.84v4.84h-4.84zM38.70 159.65h4.84v4.84h-4.84zM48.38 159.65h4.84v4.84h-4.84zM62.89 159.65h9.68v4.84h-9.68zM82.24 159.65h24.19v4.84h-24.19zM140.30 159.65h4.84v4.84h-4.84zM159.65 159.65h4.84v4.84h-4.84zM0.00 164.49h4.84v4.84h-4.84zM9.68 164.49h14.51v4.84h-14.51zM29.03 164.49h4.84v4.84h-4.84zM43.54 164.49h14.51v4.84h-14.51zM72.57 164.49h4.84v4.84h-4.84zM87.08 164.49h4.84v4.84h-4.84zM101.59 164.49h4.84v4.84h-4.84zM111.27 164.49h14.51v4.84h-14.51zM130.62 164.49h4.84v4.84h-4.84zM145.14 164.49h14.51v4.84h-14.51zM164.49 164.49h14.51v4.84h-14.51zM0.00 169.32h4.84v4.84h-4.84zM29.03 169.32h4.84v4.84h-4.84zM38.70 169.32h4.84v4.84h-4.84zM48.38 169.32h9.68v4.84h-9.68zM62.89 169.32h9.68v4.84h-9.68zM87.08 169.32h9.68v4.84h-9.68zM111.27 169.32h4.84v4.84h-4.84zM130.62 169.32h4.84v4.84h-4.84zM145.14 169.32h9.68v4.84h-9.68zM159.65 169.32h9.68v4.84h-9.68zM174.16 169.32h4.84v4.84h-4.84zM0.00 174.16h33.86v4.84h-33.86zM53.22 174.16h9.68v4.84h-9.68zM67.73 174.16h9.68v4.84h-9.68zM87.08 174.16h9.68v4.84h-9.68zM125.78 174.16h19.35v4.84h-19.35zM149.97 174.16h9.68v4.84h-9.68zM174.16 174.16h4.84v4.84h-4.84z" fill="#000"/></svg>
<svg style="left:1518px;top:645px;" width="50" height="45" viewBox="0 0 50 45"><ellipse cx="20" cy="18" rx="17" ry="14" fill="#62b900" stroke="#fff" stroke-width="2"/><circle cx="14" cy="15" r="2.2" fill="#fff"/><circle cx="25" cy="15" r="2.2" fill="#fff"/><ellipse cx="33" cy="29" rx="14" ry="12" fill="#f4f4f4" stroke="#fff" stroke-width="2"/><circle cx="28" cy="27" r="1.8" fill="#888"/><circle cx="37" cy="27" r="1.8" fill="#888"/></svg>
<div class="a" style="left:1735px;top:628px;width:43px;height:43px;background:#fff;border-radius:6px;box-shadow:0 0 1.5px #bbb"></div>
<svg style="left:1735px;top:628px;" width="43" height="43" viewBox="0 0 43 43"><path d="M11 12 C15 6 24 3 34 3.5 L37 4 V18 C33 15 25 14 18 15 L10 17 Z" fill="#1c2a4a"/><path d="M10 12 L5 9 L9 17 Z" fill="#1c2a4a"/><path d="M15 16 C22 14 32 15 37 18 V30 C33 34 28 36 24 35 C20 33 17 27 15 22 Z" fill="#f6efb8"/><path d="M14 17 C13 20 14 23 16 24" fill="none" stroke="#8cb04a" stroke-width="1.5"/><path d="M25 27 L28 35" stroke="#d0702a" stroke-width="1.6"/><path d="M3 39 C6 33 12 29 17 28 C16 32 15 36 14 39 Z" fill="#1c2a4a"/><path d="M14 39 C15 34 18 31 22 31 C27 32 29 36 29 39 Z" fill="#f3f0c0"/><path d="M18 39 L20 35 L22 39" fill="#222"/></svg>
<div class="a" style="left:1944px;top:646px;width:44px;height:44px;background:#fff;border-radius:6px;box-shadow:0 0 1.5px #bbb"></div>
<svg style="left:1944px;top:646px;" width="44" height="44" viewBox="0 0 44 44"><ellipse cx="21" cy="14" rx="13.5" ry="7" transform="rotate(-20 21 14)" fill="#1677ff"/><circle cx="18.5" cy="12" r="5" fill="#fff"/><circle cx="18.5" cy="12" r="3.4" fill="#1677ff"/><path d="M22 23 L23 26 M25 22 L26.5 25.5" stroke="#1677ff" stroke-width="1"/><text x="22" y="32.5" font-size="7.5" font-weight="bold" text-anchor="middle" fill="#1677ff" font-family="Liberation Sans" letter-spacing="1.5">1024</text><rect x="8" y="34.5" width="28" height="5.5" fill="#1677ff"/><path d="M10 37.3 H34" stroke="#fff" stroke-width="1.6" stroke-dasharray="3 1.6"/></svg>
<div class="t" style="left:1465px;top:781.0px;font-size:24px;line-height:24px;color:#262626;font-weight:bold;">卓大的微信号！</div>
<div class="t" style="left:1491px;top:818.9px;font-size:24px;line-height:24px;color:#595959;font-weight:normal;">骚扰卓大 :)</div>
<div class="t" style="left:1698px;top:762.5px;font-size:24px;line-height:24px;color:#262626;font-weight:bold;">小镇程序员</div>
<div class="t" style="left:1660px;top:799.5px;font-size:24px;line-height:24px;color:#595959;font-weight:normal;">代码与生活，还有</div>
<div class="t" style="left:1732px;top:837.5px;font-size:24px;line-height:24px;color:#595959;font-weight:normal;">钱途</div>
<div class="t" style="left:1880px;top:781.0px;font-size:24px;line-height:24px;color:#262626;font-weight:bold;">1024创新实验室</div>
<div class="t" style="left:1918px;top:818.9px;font-size:24px;line-height:24px;color:#595959;font-weight:normal;">官方账号</div>
<div class="a" style="left:20px;top:903px;width:679px;height:437px;background:#fff;border:1.5px solid #f0f0f0;border-radius:3px"></div>
<div class="a" style="left:21.5px;top:910px;width:6.0px;height:60px;background:#1890ff"></div>
<div class="a" style="left:21.5px;top:980px;width:676.0px;height:2px;background:#f0f0f0"></div>
<div class="a" style="left:719.5px;top:903px;width:678.5px;height:437px;background:#fff;border:1.5px solid #f0f0f0;border-radius:3px"></div>
<div class="a" style="left:721.0px;top:910px;width:6.0px;height:60px;background:#1890ff"></div>
<div class="a" style="left:721.0px;top:980px;width:675.5px;height:2px;background:#f0f0f0"></div>
<div class="a" style="left:1418.5px;top:903px;width:677.5px;height:437px;background:#fff;border:1.5px solid #f0f0f0;border-radius:3px"></div>
<div class="a" style="left:1420.0px;top:910px;width:6.0px;height:60px;background:#1890ff"></div>
<div class="a" style="left:1420.0px;top:980px;width:674.5px;height:2px;background:#f0f0f0"></div>
<svg style="left:46px;top:924px;" width="36" height="36" viewBox="0 0 36 36"><path d="M17 6.5 A 12.5 12.5 0 1 0 29.5 19 H17 Z" fill="#e6f7ff" stroke="#1890ff" stroke-width="2.6" stroke-linejoin="miter"/><path d="M21.5 1.5 A 13 13 0 0 1 34.5 14.5 H21.5 Z" fill="#e6f7ff" stroke="#1890ff" stroke-width="2.6"/></svg>
<div class="t" style="left:97px;top:931.0px;font-size:28px;line-height:28px;color:#262626;font-weight:normal;letter-spacing:0.5px;">【1024创新实验室】上班摸鱼次数</div>
<div class="a" style="left:113px;top:1044px;width:46px;height:24px;background:#5470c6;border-radius:5px"></div>
<div class="t" style="left:171px;top:1043.5px;font-size:24px;line-height:24px;color:#333;font-weight:normal;">初晓</div>
<div class="a" style="left:243px;top:1044px;width:46px;height:24px;background:#91cc75;border-radius:5px"></div>
<div class="t" style="left:301px;top:1043.5px;font-size:24px;line-height:24px;color:#333;font-weight:normal;">善逸</div>
<div class="a" style="left:373px;top:1044px;width:46px;height:24px;background:#fac858;border-radius:5px"></div>
<div class="t" style="left:431px;top:1043.5px;font-size:24px;line-height:24px;color:#333;font-weight:normal;">胡克</div>
<div class="a" style="left:503px;top:1044px;width:46px;height:24px;background:#ee6666;border-radius:5px"></div>
<div class="t" style="left:561px;top:1043.5px;font-size:24px;line-height:24px;color:#333;font-weight:normal;">罗伊</div>
<svg style="left:-399px;top:-160px" width="2878" height="1489" viewBox="0 0 2878 1489"><path d="M774.30 1259.80 A166 166 0 1 1 716.82 1585.81 L732.65 1542.29 A120 120 0 1 0 774.30 1306.11 Z" fill="#5470c6" stroke="#5470c6" stroke-width="28" stroke-linejoin="round"/><path d="M686.18 1574.66 A166 166 0 0 1 602.38 1367.23 L644.00 1387.53 A120 120 0 0 0 702.02 1531.14 Z" fill="#91cc75" stroke="#91cc75" stroke-width="28" stroke-linejoin="round"/><path d="M616.67 1337.93 A166 166 0 0 1 697.61 1270.38 L710.14 1314.96 A120 120 0 0 0 658.29 1358.23 Z" fill="#fac858" stroke="#fac858" stroke-width="28" stroke-linejoin="round"/><path d="M728.99 1261.55 A166 166 0 0 1 741.70 1259.80 L741.70 1306.11 A120 120 0 0 0 741.52 1306.14 Z" fill="#ee6666" stroke="#ee6666" stroke-width="28" stroke-linejoin="round"/></svg>
<svg style="left:746px;top:925px;" width="34" height="34" viewBox="0 0 34 34"><rect x="1.5" y="1.5" width="31" height="31" rx="1" fill="#e6f7ff" stroke="#1890ff" stroke-width="3"/><circle cx="11" cy="11" r="1.6" fill="#1890ff"/><circle cx="11" cy="16.5" r="1.6" fill="#1890ff"/><circle cx="11" cy="22" r="1.6" fill="#1890ff"/><path d="M16 11 H23.5 M16 16.5 H23.5 M16 22 H23.5" stroke="#1890ff" stroke-width="2.6" stroke-linecap="round"/></svg>
<div class="t" style="left:797px;top:931.0px;font-size:28px;line-height:28px;color:#262626;font-weight:normal;letter-spacing:0.5px;">【1024创新实验室】人员饭量</div>
<div class="a" style="left:812px;top:1014px;width:50px;height:28px;background:#5470c6;border-radius:7px"></div>
<div class="t" style="left:872px;top:1016.5px;font-size:24px;line-height:24px;color:#333;font-weight:normal;">善逸</div>
<div class="a" style="left:940px;top:1014px;width:50px;height:28px;background:#91cc75;border-radius:7px"></div>
<div class="t" style="left:1000px;top:1016.5px;font-size:24px;line-height:24px;color:#333;font-weight:normal;">胡克</div>
<div class="a" style="left:1068px;top:1014px;width:50px;height:28px;background:#fac858;border-radius:7px"></div>
<div class="t" style="left:1128px;top:1016.5px;font-size:24px;line-height:24px;color:#333;font-weight:normal;">开云</div>
<div class="a" style="left:1196px;top:1014px;width:50px;height:28px;background:#ee6666;border-radius:7px"></div>
<div class="t" style="left:1256px;top:1016.5px;font-size:24px;line-height:24px;color:#333;font-weight:normal;">初晓</div>
<div class="t" style="left:764px;top:1109.0px;font-size:25px;line-height:25px;color:#6e7079;font-weight:normal;">200</div>
<div class="t" style="left:764px;top:1205.0px;font-size:25px;line-height:25px;color:#6e7079;font-weight:normal;">150</div>
<div class="a" style="left:821px;top:1124px;width:525px;height:2px;background:#e0e6f1"></div>
<div class="a" style="left:821px;top:1220px;width:525px;height:2px;background:#e0e6f1"></div>
<div class="a" style="left:876px;top:1125px;width:18.5px;height:215px;background:#fac858"></div>
<div class="a" style="left:937px;top:1125px;width:18.5px;height:215px;background:#5470c6"></div>
<div class="a" style="left:1042px;top:1220px;width:18.5px;height:120px;background:#5470c6"></div>
<div class="a" style="left:1317.5px;top:1125px;width:18.5px;height:215px;background:#ee6666"></div>
<svg style="left:1443px;top:923px;" width="36" height="36" viewBox="0 0 36 36"><path d="M18 2.5 L22.6 12.2 L33 13.5 L25.3 20.6 L27.4 31 L18 25.8 L8.6 31 L10.7 20.6 L3 13.5 L13.4 12.2 Z" fill="#e6f7ff" stroke="#1890ff" stroke-width="2.6" stroke-linejoin="round"/></svg>
<div class="t" style="left:1499px;top:931.0px;font-size:28px;line-height:28px;color:#262626;font-weight:normal;">已办待办</div>
<div class="a" style="left:1463px;top:1004.5px;width:587px;height:63.0px;background:#fff;border:2px solid #d9d9d9;border-radius:7px"></div>
<div class="a" style="left:1473px;top:1020.5px;width:32px;height:31.0px;background:#fff;border:2px solid #d9d9d9;border-radius:3px"></div>
<div class="t" style="left:1521px;top:1025.0px;font-size:28px;line-height:28px;color:#262626;font-weight:normal;">为SmartAdmin前端小组分配任务</div>
<svg style="left:2012px;top:1022.5px;" width="28" height="28" viewBox="0 0 28 28"><path d="M14 2.5 L17.3 9.9 L25.4 10.7 L19.3 16.1 L21.1 24 L14 19.9 L6.9 24 L8.7 16.1 L2.6 10.7 L10.7 9.9 Z" fill="none" stroke="#bfbfbf" stroke-width="2" stroke-linejoin="round"/></svg>
<div class="a" style="left:1463px;top:1084.5px;width:587px;height:63.0px;background:#fff;border:2px solid #d9d9d9;border-radius:7px"></div>
<div class="a" style="left:1473px;top:1100.5px;width:32px;height:31.0px;background:#fff;border:2px solid #d9d9d9;border-radius:3px"></div>
<div class="t" style="left:1521px;top:1105.0px;font-size:28px;line-height:28px;color:#262626;font-weight:normal;">跟进团建内容事宜</div>
<svg style="left:2012px;top:1102.5px;" width="28" height="28" viewBox="0 0 28 28"><path d="M14 1.5 L17.6 9.6 L26.5 10.4 L19.8 16.3 L21.8 25 L14 20.4 L6.2 25 L8.2 16.3 L1.5 10.4 L10.4 9.6 Z" fill="#fa8c16"/></svg>
<div class="a" style="left:1463px;top:1164.5px;width:587px;height:63.0px;background:#fff;border:2px solid #d9d9d9;border-radius:7px"></div>
<div class="a" style="left:1473px;top:1180.5px;width:32px;height:31.0px;background:#fff;border:2px solid #d9d9d9;border-radius:3px"></div>
<div class="t" style="left:1521px;top:1185.0px;font-size:28px;line-height:28px;color:#262626;font-weight:normal;">跟进客户定制一个软件平台</div>
<svg style="left:2012px;top:1182.5px;" width="28" height="28" viewBox="0 0 28 28"><path d="M14 2.5 L17.3 9.9 L25.4 10.7 L19.3 16.1 L21.1 24 L14 19.9 L6.9 24 L8.7 16.1 L2.6 10.7 L10.7 9.9 Z" fill="none" stroke="#bfbfbf" stroke-width="2" stroke-linejoin="round"/></svg>
<div class="a" style="left:1463px;top:1244.5px;width:587px;height:63.0px;background:#fff;border:2px solid #d9d9d9;border-radius:7px"></div>
<div class="a" style="left:1473px;top:1260.5px;width:32px;height:31.0px;background:#fff;border:2px solid #d9d9d9;border-radius:3px"></div>
<div class="t" style="left:161px;top:141.5px;font-size:33.3px;line-height:34px;color:rgba(0,0,0,0.07);filter:blur(0.6px);transform:rotate(-18deg);transform-origin:0 100%">管理员 2022-10-28 11:21</div>
<div class="t" style="left:161px;top:541.5px;font-size:33.3px;line-height:34px;color:rgba(0,0,0,0.07);filter:blur(0.6px);transform:rotate(-18deg);transform-origin:0 100%">管理员 2022-10-28 11:21</div>
<div class="t" style="left:161px;top:941.5px;font-size:33.3px;line-height:34px;color:rgba(0,0,0,0.07);filter:blur(0.6px);transform:rotate(-18deg);transform-origin:0 100%">管理员 2022-10-28 11:21</div>
<div class="t" style="left:161px;top:1341.5px;font-size:33.3px;line-height:34px;color:rgba(0,0,0,0.07);filter:blur(0.6px);transform:rotate(-18deg);transform-origin:0 100%">管理员 2022-10-28 11:21</div>
<div class="t" style="left:962px;top:141.5px;font-size:33.3px;line-height:34px;color:rgba(0,0,0,0.07);filter:blur(0.6px);transform:rotate(-18deg);transform-origin:0 100%">管理员 2022-10-28 11:21</div>
<div class="t" style="left:962px;top:541.5px;font-size:33.3px;line-height:34px;color:rgba(0,0,0,0.07);filter:blur(0.6px);transform:rotate(-18deg);transform-origin:0 100%">管理员 2022-10-28 11:21</div>
<div class="t" style="left:962px;top:941.5px;font-size:33.3px;line-height:34px;color:rgba(0,0,0,0.07);filter:blur(0.6px);transform:rotate(-18deg);transform-origin:0 100%">管理员 2022-10-28 11:21</div>
<div class="t" style="left:962px;top:1341.5px;font-size:33.3px;line-height:34px;color:rgba(0,0,0,0.07);filter:blur(0.6px);transform:rotate(-18deg);transform-origin:0 100%">管理员 2022-10-28 11:21</div>
<div class="t" style="left:1763px;top:141.5px;font-size:33.3px;line-height:34px;color:rgba(0,0,0,0.07);filter:blur(0.6px);transform:rotate(-18deg);transform-origin:0 100%">管理员 2022-10-28 11:21</div>
<div class="t" style="left:1763px;top:541.5px;font-size:33.3px;line-height:34px;color:rgba(0,0,0,0.07);filter:blur(0.6px);transform:rotate(-18deg);transform-origin:0 100%">管理员 2022-10-28 11:21</div>
<div class="t" style="left:1763px;top:941.5px;font-size:33.3px;line-height:34px;color:rgba(0,0,0,0.07);filter:blur(0.6px);transform:rotate(-18deg);transform-origin:0 100%">管理员 2022-10-28 11:21</div>
<div class="t" style="left:1763px;top:1341.5px;font-size:33.3px;line-height:34px;color:rgba(0,0,0,0.07);filter:blur(0.6px);transform:rotate(-18deg);transform-origin:0 100%">管理员 2022-10-28 11:21</div>
</div>
<div class="a" style="left:2515px;top:160px;width:4px;height:1264px;background:#c1c1c1;border-radius:2px"></div>
<div class="t" style="left:980px;top:1448.5px;font-size:28px;line-height:28px;color:#8c8c8c;font-weight:normal;letter-spacing:-0.3px;">SmartAdmin V2.x @copyright 河南·洛阳【1024创新实验室】 Since 2012-2022</div>
</body></html>
